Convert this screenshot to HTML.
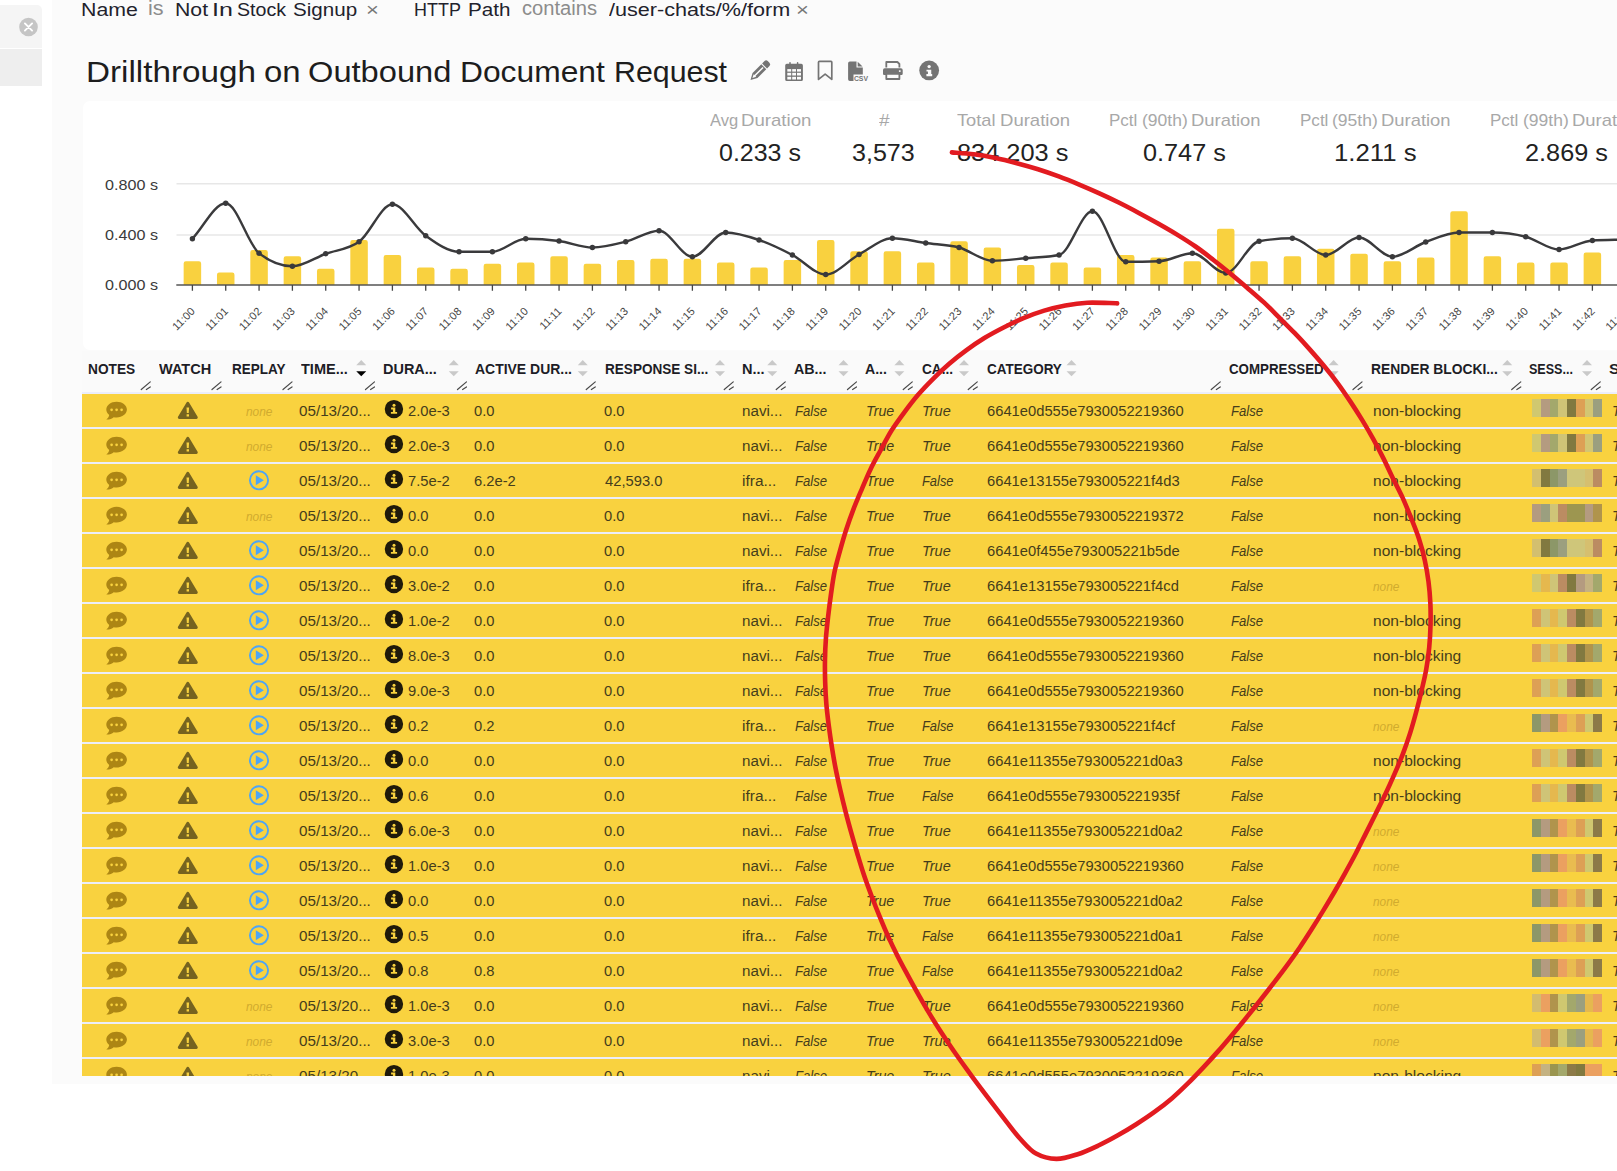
<!DOCTYPE html>
<html><head><meta charset="utf-8"><title>Drillthrough on Outbound Document Request</title>
<style>
html,body{margin:0;padding:0;background:#fff;}
body{width:1617px;height:1171px;overflow:hidden;position:relative;font-family:"Liberation Sans",sans-serif;}
.t{position:absolute;white-space:pre;transform-origin:0 0;}
.abs{position:absolute;}
.row{position:absolute;left:82px;width:1535px;height:33px;background:#f9d23f;}
.sep{position:absolute;left:82px;width:1535px;height:2px;background:#eceefa;}
svg{position:absolute;left:0;top:0;overflow:visible;}
</style></head><body>
<div class="abs" style="left:52px;top:0;width:1565px;height:1083.5px;background:#fbfbfb"></div><div class="abs" style="left:0;top:5px;width:42px;height:43.3px;background:#f5f5f5;border-radius:0 5px 0 0"></div><div class="abs" style="left:0;top:49px;width:42px;height:37px;background:#eeeeee"></div><svg width="60" height="60" viewBox="0 0 60 60"><circle cx="28.5" cy="27" r="9.3" fill="#c5c5c5"/><path d="M24.9 23.4l7.2 7.2M32.1 23.4l-7.2 7.2" stroke="#fff" stroke-width="1.9" stroke-linecap="round"/></svg><div class="abs" style="left:82.5px;top:101px;width:1540px;height:248.5px;background:#fff;border-radius:7px"></div><div class="abs" style="left:82px;top:351px;width:1535px;height:41px;background:#fafafa"></div><svg width="1617" height="360" viewBox="0 0 1617 360"><g stroke="#e7e7e7" stroke-width="1.4"><path d="M176.5 183.8H1617M176.5 235H1617"/></g><path d="M183.65 285.0V263.45Q183.65 261.25 185.85 261.25H198.95Q201.15 261.25 201.15 263.45V285.0ZM216.98 285.0V274.7Q216.98 272.5 219.18 272.5H232.28Q234.48 272.5 234.48 274.7V285.0ZM250.32 285.0V252.2Q250.32 250 252.52 250H265.62Q267.82 250 267.82 252.2V285.0ZM283.65 285.0V258.45Q283.65 256.25 285.85 256.25H298.95Q301.15 256.25 301.15 258.45V285.0ZM316.98 285.0V270.95Q316.98 268.75 319.18 268.75H332.28Q334.48 268.75 334.48 270.95V285.0ZM350.31 285.0V242.2Q350.31 240 352.51 240H365.62Q367.81 240 367.81 242.2V285.0ZM383.65 285.0V257.2Q383.65 255 385.85 255H398.95Q401.15 255 401.15 257.2V285.0ZM416.98 285.0V269.7Q416.98 267.5 419.18 267.5H432.28Q434.48 267.5 434.48 269.7V285.0ZM450.31 285.0V270.95Q450.31 268.75 452.51 268.75H465.61Q467.81 268.75 467.81 270.95V285.0ZM483.65 285.0V265.95Q483.65 263.75 485.85 263.75H498.95Q501.15 263.75 501.15 265.95V285.0ZM516.98 285.0V264.7Q516.98 262.5 519.18 262.5H532.28Q534.48 262.5 534.48 264.7V285.0ZM550.31 285.0V258.45Q550.31 256.25 552.51 256.25H565.61Q567.81 256.25 567.81 258.45V285.0ZM583.65 285.0V265.95Q583.65 263.75 585.85 263.75H598.95Q601.15 263.75 601.15 265.95V285.0ZM616.98 285.0V262.2Q616.98 260 619.18 260H632.28Q634.48 260 634.48 262.2V285.0ZM650.31 285.0V260.95Q650.31 258.75 652.51 258.75H665.61Q667.81 258.75 667.81 260.95V285.0ZM683.64 285.0V260.95Q683.64 258.75 685.85 258.75H698.94Q701.14 258.75 701.14 260.95V285.0ZM716.98 285.0V264.7Q716.98 262.5 719.18 262.5H732.28Q734.48 262.5 734.48 264.7V285.0ZM750.31 285.0V269.7Q750.31 267.5 752.51 267.5H765.61Q767.81 267.5 767.81 269.7V285.0ZM783.64 285.0V262.2Q783.64 260 785.84 260H798.94Q801.14 260 801.14 262.2V285.0ZM816.98 285.0V242.2Q816.98 240 819.18 240H832.28Q834.48 240 834.48 242.2V285.0ZM850.31 285.0V253.45Q850.31 251.25 852.51 251.25H865.61Q867.81 251.25 867.81 253.45V285.0ZM883.64 285.0V253.45Q883.64 251.25 885.84 251.25H898.94Q901.14 251.25 901.14 253.45V285.0ZM916.98 285.0V264.7Q916.98 262.5 919.18 262.5H932.28Q934.48 262.5 934.48 264.7V285.0ZM950.31 285.0V243.45Q950.31 241.25 952.51 241.25H965.61Q967.81 241.25 967.81 243.45V285.0ZM983.64 285.0V249.7Q983.64 247.5 985.84 247.5H998.94Q1001.14 247.5 1001.14 249.7V285.0ZM1016.97 285.0V267.2Q1016.97 265 1019.17 265H1032.27Q1034.47 265 1034.47 267.2V285.0ZM1050.31 285.0V264.7Q1050.31 262.5 1052.51 262.5H1065.61Q1067.81 262.5 1067.81 264.7V285.0ZM1083.64 285.0V269.7Q1083.64 267.5 1085.84 267.5H1098.94Q1101.14 267.5 1101.14 269.7V285.0ZM1116.97 285.0V257.2Q1116.97 255 1119.17 255H1132.27Q1134.47 255 1134.47 257.2V285.0ZM1150.31 285.0V259.7Q1150.31 257.5 1152.51 257.5H1165.61Q1167.81 257.5 1167.81 259.7V285.0ZM1183.64 285.0V263.45Q1183.64 261.25 1185.84 261.25H1198.94Q1201.14 261.25 1201.14 263.45V285.0ZM1216.97 285.0V230.95Q1216.97 228.75 1219.17 228.75H1232.27Q1234.47 228.75 1234.47 230.95V285.0ZM1250.31 285.0V263.45Q1250.31 261.25 1252.51 261.25H1265.61Q1267.81 261.25 1267.81 263.45V285.0ZM1283.64 285.0V258.45Q1283.64 256.25 1285.84 256.25H1298.94Q1301.14 256.25 1301.14 258.45V285.0ZM1316.97 285.0V250.95Q1316.97 248.75 1319.17 248.75H1332.27Q1334.47 248.75 1334.47 250.95V285.0ZM1350.31 285.0V255.95Q1350.31 253.75 1352.51 253.75H1365.61Q1367.81 253.75 1367.81 255.95V285.0ZM1383.64 285.0V263.45Q1383.64 261.25 1385.84 261.25H1398.94Q1401.14 261.25 1401.14 263.45V285.0ZM1416.97 285.0V259.7Q1416.97 257.5 1419.17 257.5H1432.27Q1434.47 257.5 1434.47 259.7V285.0ZM1450.3 285.0V213.45Q1450.3 211.25 1452.5 211.25H1465.6Q1467.8 211.25 1467.8 213.45V285.0ZM1483.64 285.0V258.45Q1483.64 256.25 1485.84 256.25H1498.94Q1501.14 256.25 1501.14 258.45V285.0ZM1516.97 285.0V264.7Q1516.97 262.5 1519.17 262.5H1532.27Q1534.47 262.5 1534.47 264.7V285.0ZM1550.3 285.0V264.7Q1550.3 262.5 1552.5 262.5H1565.6Q1567.8 262.5 1567.8 264.7V285.0ZM1583.64 285.0V254.7Q1583.64 252.5 1585.84 252.5H1598.94Q1601.14 252.5 1601.14 254.7V285.0Z" fill="#f9d13f"/><path d="M176.3 285.0H1617" stroke="#555" stroke-width="1.5"/><path d="M192.4 285.0V290.8M225.73 285.0V290.8M259.07 285.0V290.8M292.4 285.0V290.8M325.73 285.0V290.8M359.06 285.0V290.8M392.4 285.0V290.8M425.73 285.0V290.8M459.06 285.0V290.8M492.4 285.0V290.8M525.73 285.0V290.8M559.06 285.0V290.8M592.4 285.0V290.8M625.73 285.0V290.8M659.06 285.0V290.8M692.39 285.0V290.8M725.73 285.0V290.8M759.06 285.0V290.8M792.39 285.0V290.8M825.73 285.0V290.8M859.06 285.0V290.8M892.39 285.0V290.8M925.73 285.0V290.8M959.06 285.0V290.8M992.39 285.0V290.8M1025.72 285.0V290.8M1059.06 285.0V290.8M1092.39 285.0V290.8M1125.72 285.0V290.8M1159.06 285.0V290.8M1192.39 285.0V290.8M1225.72 285.0V290.8M1259.06 285.0V290.8M1292.39 285.0V290.8M1325.72 285.0V290.8M1359.06 285.0V290.8M1392.39 285.0V290.8M1425.72 285.0V290.8M1459.05 285.0V290.8M1492.39 285.0V290.8M1525.72 285.0V290.8M1559.05 285.0V290.8M1592.39 285.0V290.8M1625.72 285.0V290.8" stroke="#444" stroke-width="1.3"/><path d="M192.4 238.75C203.51 226.92 214.62 203.25 225.73 203.25C236.84 203.25 247.96 244.58 259.07 253.25C270.18 261.92 281.29 266.25 292.4 266.25C303.51 266.25 314.62 257.83 325.73 253.75C336.84 249.67 347.95 249.75 359.06 241.75C370.18 233.75 381.29 204.25 392.4 204.25C403.51 204.25 414.62 227.83 425.73 235.75C436.84 243.67 447.95 251.75 459.06 251.75C470.17 251.75 481.29 251.75 492.4 251.75C503.51 251.75 514.62 238.75 525.73 238.75C536.84 238.75 547.95 239.54 559.06 241C570.17 242.46 581.28 247.5 592.4 247.5C603.51 247.5 614.62 244.54 625.73 241.75C636.84 238.96 647.95 230.75 659.06 230.75C670.17 230.75 681.28 256.75 692.39 256.75C703.51 256.75 714.62 232.5 725.73 232.5C736.84 232.5 747.95 236.25 759.06 240C770.17 243.75 781.28 249.25 792.39 255C803.5 260.75 814.62 274.5 825.73 274.5C836.84 274.5 847.95 260.54 859.06 254.5C870.17 248.46 881.28 238.25 892.39 238.25C903.5 238.25 914.62 241.46 925.73 243C936.84 244.54 947.95 244.54 959.06 247.5C970.17 250.46 981.28 260.75 992.39 260.75C1003.5 260.75 1014.61 259.21 1025.72 258.25C1036.84 257.29 1047.95 257.17 1059.06 255C1070.17 252.83 1081.28 211.25 1092.39 211.25C1103.5 211.25 1114.61 261.75 1125.72 261.75C1136.84 261.75 1147.95 261.58 1159.06 261.25C1170.17 260.92 1181.28 253.25 1192.39 253.25C1203.5 253.25 1214.61 273 1225.72 273C1236.83 273 1247.94 243.25 1259.06 241.25C1270.17 239.25 1281.28 238.25 1292.39 238.25C1303.5 238.25 1314.61 255 1325.72 255C1336.83 255 1347.94 237.5 1359.06 237.5C1370.17 237.5 1381.28 256.75 1392.39 256.75C1403.5 256.75 1414.61 246.04 1425.72 242C1436.83 237.96 1447.94 232.5 1459.05 232.5C1470.16 232.5 1481.28 232.5 1492.39 232.5C1503.5 232.5 1514.61 233.92 1525.72 236.75C1536.83 239.58 1547.94 249.5 1559.05 249.5C1570.16 249.5 1581.28 241.17 1592.39 240.5C1603.5 239.83 1614.61 239.83 1625.72 239.5" fill="none" stroke="#3a3a3c" stroke-width="2.4" stroke-linejoin="round"/><g fill="#39393b"><circle cx="192.4" cy="238.75" r="2.7"/><circle cx="225.73" cy="203.25" r="2.7"/><circle cx="259.07" cy="253.25" r="2.7"/><circle cx="292.4" cy="266.25" r="2.7"/><circle cx="325.73" cy="253.75" r="2.7"/><circle cx="359.06" cy="241.75" r="2.7"/><circle cx="392.4" cy="204.25" r="2.7"/><circle cx="425.73" cy="235.75" r="2.7"/><circle cx="459.06" cy="251.75" r="2.7"/><circle cx="492.4" cy="251.75" r="2.7"/><circle cx="525.73" cy="238.75" r="2.7"/><circle cx="559.06" cy="241" r="2.7"/><circle cx="592.4" cy="247.5" r="2.7"/><circle cx="625.73" cy="241.75" r="2.7"/><circle cx="659.06" cy="230.75" r="2.7"/><circle cx="692.39" cy="256.75" r="2.7"/><circle cx="725.73" cy="232.5" r="2.7"/><circle cx="759.06" cy="240" r="2.7"/><circle cx="792.39" cy="255" r="2.7"/><circle cx="825.73" cy="274.5" r="2.7"/><circle cx="859.06" cy="254.5" r="2.7"/><circle cx="892.39" cy="238.25" r="2.7"/><circle cx="925.73" cy="243" r="2.7"/><circle cx="959.06" cy="247.5" r="2.7"/><circle cx="992.39" cy="260.75" r="2.7"/><circle cx="1025.72" cy="258.25" r="2.7"/><circle cx="1059.06" cy="255" r="2.7"/><circle cx="1092.39" cy="211.25" r="2.7"/><circle cx="1125.72" cy="261.75" r="2.7"/><circle cx="1159.06" cy="261.25" r="2.7"/><circle cx="1192.39" cy="253.25" r="2.7"/><circle cx="1225.72" cy="273" r="2.7"/><circle cx="1259.06" cy="241.25" r="2.7"/><circle cx="1292.39" cy="238.25" r="2.7"/><circle cx="1325.72" cy="255" r="2.7"/><circle cx="1359.06" cy="237.5" r="2.7"/><circle cx="1392.39" cy="256.75" r="2.7"/><circle cx="1425.72" cy="242" r="2.7"/><circle cx="1459.05" cy="232.5" r="2.7"/><circle cx="1492.39" cy="232.5" r="2.7"/><circle cx="1525.72" cy="236.75" r="2.7"/><circle cx="1559.05" cy="249.5" r="2.7"/><circle cx="1592.39" cy="240.5" r="2.7"/><circle cx="1625.72" cy="239.5" r="2.7"/></g><g font-family="Liberation Sans, sans-serif" font-size="11" fill="#454545" text-anchor="end"><text transform="translate(195.6 312) rotate(-45)">11:00</text><text transform="translate(228.93 312) rotate(-45)">11:01</text><text transform="translate(262.27 312) rotate(-45)">11:02</text><text transform="translate(295.6 312) rotate(-45)">11:03</text><text transform="translate(328.93 312) rotate(-45)">11:04</text><text transform="translate(362.26 312) rotate(-45)">11:05</text><text transform="translate(395.6 312) rotate(-45)">11:06</text><text transform="translate(428.93 312) rotate(-45)">11:07</text><text transform="translate(462.26 312) rotate(-45)">11:08</text><text transform="translate(495.6 312) rotate(-45)">11:09</text><text transform="translate(528.93 312) rotate(-45)">11:10</text><text transform="translate(562.26 312) rotate(-45)">11:11</text><text transform="translate(595.6 312) rotate(-45)">11:12</text><text transform="translate(628.93 312) rotate(-45)">11:13</text><text transform="translate(662.26 312) rotate(-45)">11:14</text><text transform="translate(695.6 312) rotate(-45)">11:15</text><text transform="translate(728.93 312) rotate(-45)">11:16</text><text transform="translate(762.26 312) rotate(-45)">11:17</text><text transform="translate(795.59 312) rotate(-45)">11:18</text><text transform="translate(828.93 312) rotate(-45)">11:19</text><text transform="translate(862.26 312) rotate(-45)">11:20</text><text transform="translate(895.59 312) rotate(-45)">11:21</text><text transform="translate(928.93 312) rotate(-45)">11:22</text><text transform="translate(962.26 312) rotate(-45)">11:23</text><text transform="translate(995.59 312) rotate(-45)">11:24</text><text transform="translate(1028.92 312) rotate(-45)">11:25</text><text transform="translate(1062.26 312) rotate(-45)">11:26</text><text transform="translate(1095.59 312) rotate(-45)">11:27</text><text transform="translate(1128.92 312) rotate(-45)">11:28</text><text transform="translate(1162.26 312) rotate(-45)">11:29</text><text transform="translate(1195.59 312) rotate(-45)">11:30</text><text transform="translate(1228.92 312) rotate(-45)">11:31</text><text transform="translate(1262.26 312) rotate(-45)">11:32</text><text transform="translate(1295.59 312) rotate(-45)">11:33</text><text transform="translate(1328.92 312) rotate(-45)">11:34</text><text transform="translate(1362.26 312) rotate(-45)">11:35</text><text transform="translate(1395.59 312) rotate(-45)">11:36</text><text transform="translate(1428.92 312) rotate(-45)">11:37</text><text transform="translate(1462.25 312) rotate(-45)">11:38</text><text transform="translate(1495.59 312) rotate(-45)">11:39</text><text transform="translate(1528.92 312) rotate(-45)">11:40</text><text transform="translate(1562.25 312) rotate(-45)">11:41</text><text transform="translate(1595.59 312) rotate(-45)">11:42</text><text transform="translate(1628.92 312) rotate(-45)">11:43</text></g></svg><svg width="1617" height="100" viewBox="0 0 1617 100"><g transform="translate(750.5 80.0) rotate(-45)"><path fill="#747474" d="M0 0L6.4 -3.5H18.8V3.5H6.4Z"/><path fill="#747474" d="M19.9 -3.5H23.3a2.3 2.3 0 0 1 2.3 2.3V1.2a2.3 2.3 0 0 1 -2.3 2.3H19.9Z"/><path fill="#fbfbfb" d="M2.7 0L6.3 -1.8V-0.8H17.7V0.8H6.3V1.8Z"/></g><g><path fill="#747474" d="M786.8 63.8h14.5a1.6 1.6 0 0 1 1.6 1.6v14.1a1.6 1.6 0 0 1-1.6 1.6h-14.5a1.6 1.6 0 0 1-1.600-1.6V65.4a1.6 1.6 0 0 1 1.6-1.6z"/><path d="M790 62.7v2.4M797.600 62.700v2.4" stroke="#747474" stroke-width="1.500" stroke-linecap="round"/><g fill="#fbfbfb"><rect x="787.3" y="69.1" width="3.9" height="2.5"/><rect x="787.3" y="72.8" width="3.9" height="2.7"/><rect x="787.3" y="76.8" width="3.9" height="2.7"/><rect x="792.2" y="69.1" width="3.8" height="2.5"/><rect x="792.2" y="72.8" width="3.8" height="2.7"/><rect x="792.2" y="76.8" width="3.8" height="2.7"/><rect x="797.0" y="69.1" width="4.0" height="2.5"/><rect x="797.0" y="72.8" width="4.0" height="2.7"/><rect x="797.0" y="76.8" width="4.0" height="2.7"/></g></g><path d="M819.3 61.35h11.700a0.8 0.8 0 0 1 0.8 0.8v17.2l-6.650-5.3-6.650 5.3v-17.2a0.8 0.8 0 0 1 0.8-0.8z" fill="none" stroke="#747474" stroke-width="1.700" stroke-linejoin="round"/><g><path fill="#747474" d="M849.9 61.4H856.5V67.6H862.8V74.4H853.5V81.1H849.9A1.8 1.8 0 0 1 848.1 79.3V63.2A1.8 1.8 0 0 1 849.9 61.4z"/><path fill="#747474" d="M857.700 61.7L862.500 66.500H857.700z"/><text x="853.900" y="80.900" font-family="Liberation Sans, sans-serif" font-weight="bold" font-size="7.500" fill="#747474" textLength="14.100" lengthAdjust="spacingAndGlyphs">CSV</text></g><g><path fill="none" stroke="#747474" stroke-width="1.800" stroke-linejoin="round" d="M886.3 67.5V62h11.100l2 2V67.500"/><path fill="#747474" d="M884.800 68.2h16.100a1.800 1.800 0 0 1 1.800 1.800v4.100a0.800 0.800 0 0 1-0.800 0.800H883.800a0.800 0.800 0 0 1-0.800-0.800V70a1.800 1.800 0 0 1 1.800-1.800z"/><path fill="#fbfbfb" stroke="#747474" stroke-width="1.800" stroke-linejoin="round" d="M886.3 73.8h13.100v5.200h-13.100z"/><rect x="898.900" y="70.300" width="1.700" height="1.600" fill="#fbfbfb"/></g><g transform="translate(929.15 70.45)"><circle r="9.900" fill="#747474"/><g fill="#fbfbfb"><circle cx="0" cy="-3.900" r="1.650"/><path d="M-2.65 -0.700H2.100V3.600H3.050V5.700H-2.750V3.600H-1.200V1H-2.650z"/></g></g></svg><span class="t" style="left:80.79px;top:-1.48px;font-size:18.7px;line-height:22px;color:#22222c;transform:scaleX(1.1401);">Name</span><span class="t" style="left:148.40px;top:-3.83px;font-size:20px;line-height:24px;color:#8c8c8c;transform:scaleX(1.0769);">is</span><span class="t" style="left:174.55px;top:-1.48px;font-size:18.7px;line-height:22px;color:#22222c;transform:scaleX(1.1362);">Not</span><span class="t" style="left:211.97px;top:-1.48px;font-size:18.7px;line-height:22px;color:#22222c;transform:scaleX(1.3391);">In</span><span class="t" style="left:237.16px;top:-1.48px;font-size:18.7px;line-height:22px;color:#22222c;transform:scaleX(1.0485);">Stock</span><span class="t" style="left:292.87px;top:-1.48px;font-size:18.7px;line-height:22px;color:#22222c;transform:scaleX(1.1018);">Signup</span><span class="t" style="left:366.09px;top:-1.48px;font-size:18.7px;line-height:22px;color:#777;transform:scaleX(1.1765);">×</span><span class="t" style="left:414.06px;top:-1.48px;font-size:18.7px;line-height:22px;color:#22222c;transform:scaleX(0.9601);">HTTP</span><span class="t" style="left:468.34px;top:-1.48px;font-size:18.7px;line-height:22px;color:#22222c;transform:scaleX(1.1043);">Path</span><span class="t" style="left:521.69px;top:-3.83px;font-size:20px;line-height:24px;color:#8c8c8c;transform:scaleX(1.0070);">contains</span><span class="t" style="left:608.75px;top:-1.48px;font-size:18.7px;line-height:22px;color:#22222c;transform:scaleX(1.1558);">/user-chats/%/form</span><span class="t" style="left:796.09px;top:-1.48px;font-size:18.7px;line-height:22px;color:#777;transform:scaleX(1.1765);">×</span><span class="t" style="left:85.65px;top:54.06px;font-size:29.4px;line-height:35px;color:#1d1d1d;transform:scaleX(1.1306);">Drillthrough</span><span class="t" style="left:263.97px;top:54.06px;font-size:29.4px;line-height:35px;color:#1d1d1d;transform:scaleX(1.1201);">on</span><span class="t" style="left:308.47px;top:54.06px;font-size:29.4px;line-height:35px;color:#1d1d1d;transform:scaleX(1.1101);">Outbound</span><span class="t" style="left:460.02px;top:54.06px;font-size:29.4px;line-height:35px;color:#1d1d1d;transform:scaleX(1.0812);">Document</span><span class="t" style="left:613.88px;top:54.06px;font-size:29.4px;line-height:35px;color:#1d1d1d;transform:scaleX(1.0321);">Request</span><span class="t" style="left:709.50px;top:110.82px;font-size:16.1px;line-height:19px;color:#a8a8a8;transform:scaleX(1.0284);">Avg</span><span class="t" style="left:741.00px;top:110.82px;font-size:16.1px;line-height:19px;color:#a8a8a8;transform:scaleX(1.1570);">Duration</span><span class="t" style="left:878.75px;top:110.82px;font-size:16.1px;line-height:19px;color:#a8a8a8;transform:scaleX(1.1798);">#</span><span class="t" style="left:957.16px;top:110.82px;font-size:16.1px;line-height:19px;color:#a8a8a8;transform:scaleX(1.1339);">Total</span><span class="t" style="left:999.75px;top:110.82px;font-size:16.1px;line-height:19px;color:#a8a8a8;transform:scaleX(1.1519);">Duration</span><span class="t" style="left:1108.83px;top:110.82px;font-size:16.1px;line-height:19px;color:#a8a8a8;transform:scaleX(1.0547);">Pctl</span><span class="t" style="left:1141.52px;top:110.82px;font-size:16.1px;line-height:19px;color:#a8a8a8;transform:scaleX(1.0872);">(90th)</span><span class="t" style="left:1191.11px;top:110.82px;font-size:16.1px;line-height:19px;color:#a8a8a8;transform:scaleX(1.1433);">Duration</span><span class="t" style="left:1299.62px;top:110.82px;font-size:16.1px;line-height:19px;color:#a8a8a8;transform:scaleX(1.0588);">Pctl</span><span class="t" style="left:1332.32px;top:110.82px;font-size:16.1px;line-height:19px;color:#a8a8a8;transform:scaleX(1.0872);">(95th)</span><span class="t" style="left:1381.31px;top:110.82px;font-size:16.1px;line-height:19px;color:#a8a8a8;transform:scaleX(1.1433);">Duration</span><span class="t" style="left:1489.83px;top:110.82px;font-size:16.1px;line-height:19px;color:#a8a8a8;transform:scaleX(1.0547);">Pctl</span><span class="t" style="left:1522.52px;top:110.82px;font-size:16.1px;line-height:19px;color:#a8a8a8;transform:scaleX(1.0872);">(99th)</span><span class="t" style="left:1572.11px;top:110.82px;font-size:16.1px;line-height:19px;color:#a8a8a8;transform:scaleX(1.1433);">Duration</span><span class="t" style="left:718.88px;top:137.68px;font-size:24.3px;line-height:29px;color:#222;transform:scaleX(1.0274);">0.233 s</span><span class="t" style="left:852.07px;top:137.68px;font-size:24.3px;line-height:29px;color:#222;transform:scaleX(1.0315);">3,573</span><span class="t" style="left:956.96px;top:137.68px;font-size:24.3px;line-height:29px;color:#222;transform:scaleX(1.0440);">834.203 s</span><span class="t" style="left:1143.06px;top:137.68px;font-size:24.3px;line-height:29px;color:#222;transform:scaleX(1.0390);">0.747 s</span><span class="t" style="left:1334.09px;top:137.68px;font-size:24.3px;line-height:29px;color:#222;transform:scaleX(1.0604);">1.211 s</span><span class="t" style="left:1524.55px;top:137.68px;font-size:24.3px;line-height:29px;color:#222;transform:scaleX(1.0404);">2.869 s</span><span class="t" style="left:105.13px;top:174.73px;font-size:15.5px;line-height:19px;color:#3a3a3a;transform:scaleX(1.0414);">0.800 s</span><span class="t" style="left:105.13px;top:224.98px;font-size:15.5px;line-height:19px;color:#3a3a3a;transform:scaleX(1.0414);">0.400 s</span><span class="t" style="left:105.13px;top:274.98px;font-size:15.5px;line-height:19px;color:#3a3a3a;transform:scaleX(1.0414);">0.000 s</span><span class="t" style="left:87.87px;top:361.40px;font-size:14px;line-height:17px;color:#1d1d26;transform:scaleX(0.9778);font-weight:bold;">NOTES</span><span class="t" style="left:159.25px;top:361.40px;font-size:14px;line-height:17px;color:#1d1d26;transform:scaleX(1.0380);font-weight:bold;">WATCH</span><span class="t" style="left:232.13px;top:361.40px;font-size:14px;line-height:17px;color:#1d1d26;transform:scaleX(0.9640);font-weight:bold;">REPLAY</span><span class="t" style="left:301.15px;top:361.40px;font-size:14px;line-height:17px;color:#1d1d26;transform:scaleX(1.0369);font-weight:bold;">TIME...</span><span class="t" style="left:382.82px;top:361.40px;font-size:14px;line-height:17px;color:#1d1d26;transform:scaleX(1.0334);font-weight:bold;">DURA...</span><span class="t" style="left:475.20px;top:361.40px;font-size:14px;line-height:17px;color:#1d1d26;transform:scaleX(0.9970);font-weight:bold;">ACTIVE DUR...</span><span class="t" style="left:604.63px;top:361.40px;font-size:14px;line-height:17px;color:#1d1d26;transform:scaleX(0.9685);font-weight:bold;">RESPONSE SI...</span><span class="t" style="left:741.57px;top:361.40px;font-size:14px;line-height:17px;color:#1d1d26;transform:scaleX(1.0380);font-weight:bold;">N...</span><span class="t" style="left:794.19px;top:361.40px;font-size:14px;line-height:17px;color:#1d1d26;transform:scaleX(1.0179);font-weight:bold;">AB...</span><span class="t" style="left:865.20px;top:361.40px;font-size:14px;line-height:17px;color:#1d1d26;transform:scaleX(1.0078);font-weight:bold;">A...</span><span class="t" style="left:921.51px;top:361.40px;font-size:14px;line-height:17px;color:#1d1d26;transform:scaleX(0.9754);font-weight:bold;">CA...</span><span class="t" style="left:986.52px;top:361.40px;font-size:14px;line-height:17px;color:#1d1d26;transform:scaleX(0.9625);font-weight:bold;">CATEGORY</span><span class="t" style="left:1228.77px;top:361.40px;font-size:14px;line-height:17px;color:#1d1d26;transform:scaleX(0.9512);font-weight:bold;">COMPRESSED</span><span class="t" style="left:1370.86px;top:361.40px;font-size:14px;line-height:17px;color:#1d1d26;transform:scaleX(0.9878);font-weight:bold;">RENDER BLOCKI...</span><span class="t" style="left:1529.39px;top:361.40px;font-size:14px;line-height:17px;color:#1d1d26;transform:scaleX(0.8956);font-weight:bold;">SESS...</span><span class="t" style="left:1609.30px;top:361.40px;font-size:14px;line-height:17px;color:#1d1d26;transform:scaleX(1.1309);font-weight:bold;">SI</span><svg width="1617" height="400" viewBox="0 0 1617 400"><path d="M356.25 365.3h10l-5-5.4z" fill="#c9c9c9"/><path d="M356.25 371.2h10l-5 5z" fill="#000"/><path d="M448.75 365.3h10l-5-5.4z" fill="#c9c9c9"/><path d="M448.75 371.2h10l-5 5z" fill="#c9c9c9"/><path d="M577.75 365.3h10l-5-5.4z" fill="#c9c9c9"/><path d="M577.75 371.2h10l-5 5z" fill="#c9c9c9"/><path d="M715 365.3h10l-5-5.4z" fill="#c9c9c9"/><path d="M715 371.2h10l-5 5z" fill="#c9c9c9"/><path d="M767.25 365.3h10l-5-5.4z" fill="#c9c9c9"/><path d="M767.25 371.2h10l-5 5z" fill="#c9c9c9"/><path d="M838.5 365.3h10l-5-5.4z" fill="#c9c9c9"/><path d="M838.5 371.2h10l-5 5z" fill="#c9c9c9"/><path d="M894.4 365.3h10l-5-5.4z" fill="#c9c9c9"/><path d="M894.4 371.2h10l-5 5z" fill="#c9c9c9"/><path d="M959 365.3h10l-5-5.4z" fill="#c9c9c9"/><path d="M959 371.2h10l-5 5z" fill="#c9c9c9"/><path d="M1066.5 365.3h10l-5-5.4z" fill="#c9c9c9"/><path d="M1066.5 371.2h10l-5 5z" fill="#c9c9c9"/><path d="M1328.6 365.3h10l-5-5.4z" fill="#c9c9c9"/><path d="M1328.6 371.2h10l-5 5z" fill="#c9c9c9"/><path d="M1502.25 365.3h10l-5-5.4z" fill="#c9c9c9"/><path d="M1502.25 371.2h10l-5 5z" fill="#c9c9c9"/><path d="M1582 365.3h10l-5-5.4z" fill="#c9c9c9"/><path d="M1582 371.2h10l-5 5z" fill="#c9c9c9"/><path d="M141.25 389.5L150.25 381.9M146.35 389.5L150.25 386.9M212 389.5L221 381.9M217.1 389.5L221 386.9M283 389.5L292 381.9M288.1 389.5L292 386.9M365.5 389.5L374.5 381.9M370.6 389.5L374.5 386.9M457.5 389.5L466.5 381.9M462.6 389.5L466.5 386.9M586.25 389.5L595.25 381.9M591.35 389.5L595.25 386.9M724.25 389.5L733.25 381.9M729.35 389.5L733.25 386.9M776.25 389.5L785.25 381.9M781.35 389.5L785.25 386.9M847.5 389.5L856.5 381.9M852.6 389.5L856.5 386.9M903.25 389.5L912.25 381.9M908.35 389.5L912.25 386.9M968.25 389.5L977.25 381.9M973.35 389.5L977.25 386.9M1211.25 389.5L1220.25 381.9M1216.35 389.5L1220.25 386.9M1353 389.5L1362 381.9M1358.1 389.5L1362 386.9M1511.75 389.5L1520.75 381.9M1516.85 389.5L1520.75 386.9M1591.25 389.5L1600.25 381.9M1596.35 389.5L1600.25 386.9" stroke="#4a4a4a" stroke-width="1.2" stroke-linecap="round" fill="none"/></svg><div class="abs" style="left:0;top:0;width:1617px;height:1075.7px;overflow:hidden"><div class="sep" style="top:392px"></div><div class="row" style="top:394px"></div><div class="sep" style="top:427px"></div><div class="row" style="top:429px"></div><div class="sep" style="top:462px"></div><div class="row" style="top:464px"></div><div class="sep" style="top:497px"></div><div class="row" style="top:499px"></div><div class="sep" style="top:532px"></div><div class="row" style="top:534px"></div><div class="sep" style="top:567px"></div><div class="row" style="top:569px"></div><div class="sep" style="top:602px"></div><div class="row" style="top:604px"></div><div class="sep" style="top:637px"></div><div class="row" style="top:639px"></div><div class="sep" style="top:672px"></div><div class="row" style="top:674px"></div><div class="sep" style="top:707px"></div><div class="row" style="top:709px"></div><div class="sep" style="top:742px"></div><div class="row" style="top:744px"></div><div class="sep" style="top:777px"></div><div class="row" style="top:779px"></div><div class="sep" style="top:812px"></div><div class="row" style="top:814px"></div><div class="sep" style="top:847px"></div><div class="row" style="top:849px"></div><div class="sep" style="top:882px"></div><div class="row" style="top:884px"></div><div class="sep" style="top:917px"></div><div class="row" style="top:919px"></div><div class="sep" style="top:952px"></div><div class="row" style="top:954px"></div><div class="sep" style="top:987px"></div><div class="row" style="top:989px"></div><div class="sep" style="top:1022px"></div><div class="row" style="top:1024px"></div><div class="sep" style="top:1057px"></div><div class="row" style="top:1059px"></div><span class="t" style="left:245.90px;top:404.74px;font-size:12px;line-height:14px;color:#d1ab2e;transform:scaleX(0.9915);font-style:italic;">none</span><span class="t" style="left:299.46px;top:403.25px;font-size:14px;line-height:17px;color:#453d1c;transform:scaleX(1.0857);">05/13/20...</span><span class="t" style="left:408.16px;top:403.25px;font-size:14px;line-height:17px;color:#453d1c;transform:scaleX(1.0530);">2.0e-3</span><span class="t" style="left:474.47px;top:403.25px;font-size:14px;line-height:17px;color:#453d1c;transform:scaleX(1.0530);">0.0</span><span class="t" style="left:604.47px;top:403.25px;font-size:14px;line-height:17px;color:#453d1c;transform:scaleX(1.0530);">0.0</span><span class="t" style="left:741.52px;top:403.25px;font-size:14px;line-height:17px;color:#453d1c;transform:scaleX(1.0847);">navi...</span><span class="t" style="left:794.63px;top:403.25px;font-size:14px;line-height:17px;color:#453d1c;transform:scaleX(0.9371);font-style:italic;">False</span><span class="t" style="left:865.53px;top:403.25px;font-size:14px;line-height:17px;color:#453d1c;transform:scaleX(1.0168);font-style:italic;">True</span><span class="t" style="left:921.76px;top:403.25px;font-size:14px;line-height:17px;color:#453d1c;transform:scaleX(1.0360);font-style:italic;">True</span><span class="t" style="left:986.76px;top:403.25px;font-size:14px;line-height:17px;color:#453d1c;transform:scaleX(1.0530);">6641e0d555e7930052219360</span><span class="t" style="left:1230.63px;top:403.25px;font-size:14px;line-height:17px;color:#453d1c;transform:scaleX(0.9371);font-style:italic;">False</span><span class="t" style="left:1372.75px;top:403.25px;font-size:14px;line-height:17px;color:#453d1c;transform:scaleX(1.1115);">non-blocking</span><span class="t" style="left:1611.78px;top:403.25px;font-size:14px;line-height:17px;color:#453d1c;transform:scaleX(1.0168);font-style:italic;">True</span><span class="t" style="left:245.90px;top:439.74px;font-size:12px;line-height:14px;color:#d1ab2e;transform:scaleX(0.9915);font-style:italic;">none</span><span class="t" style="left:299.46px;top:438.25px;font-size:14px;line-height:17px;color:#453d1c;transform:scaleX(1.0857);">05/13/20...</span><span class="t" style="left:408.16px;top:438.25px;font-size:14px;line-height:17px;color:#453d1c;transform:scaleX(1.0530);">2.0e-3</span><span class="t" style="left:474.47px;top:438.25px;font-size:14px;line-height:17px;color:#453d1c;transform:scaleX(1.0530);">0.0</span><span class="t" style="left:604.47px;top:438.25px;font-size:14px;line-height:17px;color:#453d1c;transform:scaleX(1.0530);">0.0</span><span class="t" style="left:741.52px;top:438.25px;font-size:14px;line-height:17px;color:#453d1c;transform:scaleX(1.0847);">navi...</span><span class="t" style="left:794.63px;top:438.25px;font-size:14px;line-height:17px;color:#453d1c;transform:scaleX(0.9371);font-style:italic;">False</span><span class="t" style="left:865.53px;top:438.25px;font-size:14px;line-height:17px;color:#453d1c;transform:scaleX(1.0168);font-style:italic;">True</span><span class="t" style="left:921.76px;top:438.25px;font-size:14px;line-height:17px;color:#453d1c;transform:scaleX(1.0360);font-style:italic;">True</span><span class="t" style="left:986.76px;top:438.25px;font-size:14px;line-height:17px;color:#453d1c;transform:scaleX(1.0530);">6641e0d555e7930052219360</span><span class="t" style="left:1230.63px;top:438.25px;font-size:14px;line-height:17px;color:#453d1c;transform:scaleX(0.9371);font-style:italic;">False</span><span class="t" style="left:1372.75px;top:438.25px;font-size:14px;line-height:17px;color:#453d1c;transform:scaleX(1.1115);">non-blocking</span><span class="t" style="left:1611.78px;top:438.25px;font-size:14px;line-height:17px;color:#453d1c;transform:scaleX(1.0168);font-style:italic;">True</span><span class="t" style="left:299.46px;top:473.25px;font-size:14px;line-height:17px;color:#453d1c;transform:scaleX(1.0857);">05/13/20...</span><span class="t" style="left:408.16px;top:473.25px;font-size:14px;line-height:17px;color:#453d1c;transform:scaleX(1.0530);">7.5e-2</span><span class="t" style="left:474.26px;top:473.25px;font-size:14px;line-height:17px;color:#453d1c;transform:scaleX(1.0530);">6.2e-2</span><span class="t" style="left:604.68px;top:473.25px;font-size:14px;line-height:17px;color:#453d1c;transform:scaleX(1.0530);">42,593.0</span><span class="t" style="left:741.60px;top:473.25px;font-size:14px;line-height:17px;color:#453d1c;transform:scaleX(1.1058);">ifra...</span><span class="t" style="left:794.63px;top:473.25px;font-size:14px;line-height:17px;color:#453d1c;transform:scaleX(0.9371);font-style:italic;">False</span><span class="t" style="left:865.53px;top:473.25px;font-size:14px;line-height:17px;color:#453d1c;transform:scaleX(1.0168);font-style:italic;">True</span><span class="t" style="left:921.93px;top:473.25px;font-size:14px;line-height:17px;color:#453d1c;transform:scaleX(0.9206);font-style:italic;">False</span><span class="t" style="left:986.76px;top:473.25px;font-size:14px;line-height:17px;color:#453d1c;transform:scaleX(1.0530);">6641e13155e793005221f4d3</span><span class="t" style="left:1230.63px;top:473.25px;font-size:14px;line-height:17px;color:#453d1c;transform:scaleX(0.9371);font-style:italic;">False</span><span class="t" style="left:1372.75px;top:473.25px;font-size:14px;line-height:17px;color:#453d1c;transform:scaleX(1.1115);">non-blocking</span><span class="t" style="left:1611.78px;top:473.25px;font-size:14px;line-height:17px;color:#453d1c;transform:scaleX(1.0168);font-style:italic;">True</span><span class="t" style="left:245.90px;top:509.74px;font-size:12px;line-height:14px;color:#d1ab2e;transform:scaleX(0.9915);font-style:italic;">none</span><span class="t" style="left:299.46px;top:508.25px;font-size:14px;line-height:17px;color:#453d1c;transform:scaleX(1.0857);">05/13/20...</span><span class="t" style="left:408.37px;top:508.25px;font-size:14px;line-height:17px;color:#453d1c;transform:scaleX(1.0530);">0.0</span><span class="t" style="left:474.47px;top:508.25px;font-size:14px;line-height:17px;color:#453d1c;transform:scaleX(1.0530);">0.0</span><span class="t" style="left:604.47px;top:508.25px;font-size:14px;line-height:17px;color:#453d1c;transform:scaleX(1.0530);">0.0</span><span class="t" style="left:741.52px;top:508.25px;font-size:14px;line-height:17px;color:#453d1c;transform:scaleX(1.0847);">navi...</span><span class="t" style="left:794.63px;top:508.25px;font-size:14px;line-height:17px;color:#453d1c;transform:scaleX(0.9371);font-style:italic;">False</span><span class="t" style="left:865.53px;top:508.25px;font-size:14px;line-height:17px;color:#453d1c;transform:scaleX(1.0168);font-style:italic;">True</span><span class="t" style="left:921.76px;top:508.25px;font-size:14px;line-height:17px;color:#453d1c;transform:scaleX(1.0360);font-style:italic;">True</span><span class="t" style="left:986.76px;top:508.25px;font-size:14px;line-height:17px;color:#453d1c;transform:scaleX(1.0530);">6641e0d555e7930052219372</span><span class="t" style="left:1230.63px;top:508.25px;font-size:14px;line-height:17px;color:#453d1c;transform:scaleX(0.9371);font-style:italic;">False</span><span class="t" style="left:1372.75px;top:508.25px;font-size:14px;line-height:17px;color:#453d1c;transform:scaleX(1.1115);">non-blocking</span><span class="t" style="left:1611.78px;top:508.25px;font-size:14px;line-height:17px;color:#453d1c;transform:scaleX(1.0168);font-style:italic;">True</span><span class="t" style="left:299.46px;top:543.25px;font-size:14px;line-height:17px;color:#453d1c;transform:scaleX(1.0857);">05/13/20...</span><span class="t" style="left:408.37px;top:543.25px;font-size:14px;line-height:17px;color:#453d1c;transform:scaleX(1.0530);">0.0</span><span class="t" style="left:474.47px;top:543.25px;font-size:14px;line-height:17px;color:#453d1c;transform:scaleX(1.0530);">0.0</span><span class="t" style="left:604.47px;top:543.25px;font-size:14px;line-height:17px;color:#453d1c;transform:scaleX(1.0530);">0.0</span><span class="t" style="left:741.52px;top:543.25px;font-size:14px;line-height:17px;color:#453d1c;transform:scaleX(1.0847);">navi...</span><span class="t" style="left:794.63px;top:543.25px;font-size:14px;line-height:17px;color:#453d1c;transform:scaleX(0.9371);font-style:italic;">False</span><span class="t" style="left:865.53px;top:543.25px;font-size:14px;line-height:17px;color:#453d1c;transform:scaleX(1.0168);font-style:italic;">True</span><span class="t" style="left:921.76px;top:543.25px;font-size:14px;line-height:17px;color:#453d1c;transform:scaleX(1.0360);font-style:italic;">True</span><span class="t" style="left:986.76px;top:543.25px;font-size:14px;line-height:17px;color:#453d1c;transform:scaleX(1.0530);">6641e0f455e793005221b5de</span><span class="t" style="left:1230.63px;top:543.25px;font-size:14px;line-height:17px;color:#453d1c;transform:scaleX(0.9371);font-style:italic;">False</span><span class="t" style="left:1372.75px;top:543.25px;font-size:14px;line-height:17px;color:#453d1c;transform:scaleX(1.1115);">non-blocking</span><span class="t" style="left:1611.78px;top:543.25px;font-size:14px;line-height:17px;color:#453d1c;transform:scaleX(1.0168);font-style:italic;">True</span><span class="t" style="left:299.46px;top:578.25px;font-size:14px;line-height:17px;color:#453d1c;transform:scaleX(1.0857);">05/13/20...</span><span class="t" style="left:408.37px;top:578.25px;font-size:14px;line-height:17px;color:#453d1c;transform:scaleX(1.0530);">3.0e-2</span><span class="t" style="left:474.47px;top:578.25px;font-size:14px;line-height:17px;color:#453d1c;transform:scaleX(1.0530);">0.0</span><span class="t" style="left:604.47px;top:578.25px;font-size:14px;line-height:17px;color:#453d1c;transform:scaleX(1.0530);">0.0</span><span class="t" style="left:741.60px;top:578.25px;font-size:14px;line-height:17px;color:#453d1c;transform:scaleX(1.1058);">ifra...</span><span class="t" style="left:794.63px;top:578.25px;font-size:14px;line-height:17px;color:#453d1c;transform:scaleX(0.9371);font-style:italic;">False</span><span class="t" style="left:865.53px;top:578.25px;font-size:14px;line-height:17px;color:#453d1c;transform:scaleX(1.0168);font-style:italic;">True</span><span class="t" style="left:921.76px;top:578.25px;font-size:14px;line-height:17px;color:#453d1c;transform:scaleX(1.0360);font-style:italic;">True</span><span class="t" style="left:986.76px;top:578.25px;font-size:14px;line-height:17px;color:#453d1c;transform:scaleX(1.0530);">6641e13155e793005221f4cd</span><span class="t" style="left:1230.63px;top:578.25px;font-size:14px;line-height:17px;color:#453d1c;transform:scaleX(0.9371);font-style:italic;">False</span><span class="t" style="left:1373.30px;top:579.74px;font-size:12px;line-height:14px;color:#d1ab2e;transform:scaleX(0.9877);font-style:italic;">none</span><span class="t" style="left:1611.78px;top:578.25px;font-size:14px;line-height:17px;color:#453d1c;transform:scaleX(1.0168);font-style:italic;">True</span><span class="t" style="left:299.46px;top:613.25px;font-size:14px;line-height:17px;color:#453d1c;transform:scaleX(1.0857);">05/13/20...</span><span class="t" style="left:407.85px;top:613.25px;font-size:14px;line-height:17px;color:#453d1c;transform:scaleX(1.0530);">1.0e-2</span><span class="t" style="left:474.47px;top:613.25px;font-size:14px;line-height:17px;color:#453d1c;transform:scaleX(1.0530);">0.0</span><span class="t" style="left:604.47px;top:613.25px;font-size:14px;line-height:17px;color:#453d1c;transform:scaleX(1.0530);">0.0</span><span class="t" style="left:741.52px;top:613.25px;font-size:14px;line-height:17px;color:#453d1c;transform:scaleX(1.0847);">navi...</span><span class="t" style="left:794.63px;top:613.25px;font-size:14px;line-height:17px;color:#453d1c;transform:scaleX(0.9371);font-style:italic;">False</span><span class="t" style="left:865.53px;top:613.25px;font-size:14px;line-height:17px;color:#453d1c;transform:scaleX(1.0168);font-style:italic;">True</span><span class="t" style="left:921.76px;top:613.25px;font-size:14px;line-height:17px;color:#453d1c;transform:scaleX(1.0360);font-style:italic;">True</span><span class="t" style="left:986.76px;top:613.25px;font-size:14px;line-height:17px;color:#453d1c;transform:scaleX(1.0530);">6641e0d555e7930052219360</span><span class="t" style="left:1230.63px;top:613.25px;font-size:14px;line-height:17px;color:#453d1c;transform:scaleX(0.9371);font-style:italic;">False</span><span class="t" style="left:1372.75px;top:613.25px;font-size:14px;line-height:17px;color:#453d1c;transform:scaleX(1.1115);">non-blocking</span><span class="t" style="left:1611.78px;top:613.25px;font-size:14px;line-height:17px;color:#453d1c;transform:scaleX(1.0168);font-style:italic;">True</span><span class="t" style="left:299.46px;top:648.25px;font-size:14px;line-height:17px;color:#453d1c;transform:scaleX(1.0857);">05/13/20...</span><span class="t" style="left:408.27px;top:648.25px;font-size:14px;line-height:17px;color:#453d1c;transform:scaleX(1.0530);">8.0e-3</span><span class="t" style="left:474.47px;top:648.25px;font-size:14px;line-height:17px;color:#453d1c;transform:scaleX(1.0530);">0.0</span><span class="t" style="left:604.47px;top:648.25px;font-size:14px;line-height:17px;color:#453d1c;transform:scaleX(1.0530);">0.0</span><span class="t" style="left:741.52px;top:648.25px;font-size:14px;line-height:17px;color:#453d1c;transform:scaleX(1.0847);">navi...</span><span class="t" style="left:794.63px;top:648.25px;font-size:14px;line-height:17px;color:#453d1c;transform:scaleX(0.9371);font-style:italic;">False</span><span class="t" style="left:865.53px;top:648.25px;font-size:14px;line-height:17px;color:#453d1c;transform:scaleX(1.0168);font-style:italic;">True</span><span class="t" style="left:921.76px;top:648.25px;font-size:14px;line-height:17px;color:#453d1c;transform:scaleX(1.0360);font-style:italic;">True</span><span class="t" style="left:986.76px;top:648.25px;font-size:14px;line-height:17px;color:#453d1c;transform:scaleX(1.0530);">6641e0d555e7930052219360</span><span class="t" style="left:1230.63px;top:648.25px;font-size:14px;line-height:17px;color:#453d1c;transform:scaleX(0.9371);font-style:italic;">False</span><span class="t" style="left:1372.75px;top:648.25px;font-size:14px;line-height:17px;color:#453d1c;transform:scaleX(1.1115);">non-blocking</span><span class="t" style="left:1611.78px;top:648.25px;font-size:14px;line-height:17px;color:#453d1c;transform:scaleX(1.0168);font-style:italic;">True</span><span class="t" style="left:299.46px;top:683.25px;font-size:14px;line-height:17px;color:#453d1c;transform:scaleX(1.0857);">05/13/20...</span><span class="t" style="left:408.27px;top:683.25px;font-size:14px;line-height:17px;color:#453d1c;transform:scaleX(1.0530);">9.0e-3</span><span class="t" style="left:474.47px;top:683.25px;font-size:14px;line-height:17px;color:#453d1c;transform:scaleX(1.0530);">0.0</span><span class="t" style="left:604.47px;top:683.25px;font-size:14px;line-height:17px;color:#453d1c;transform:scaleX(1.0530);">0.0</span><span class="t" style="left:741.52px;top:683.25px;font-size:14px;line-height:17px;color:#453d1c;transform:scaleX(1.0847);">navi...</span><span class="t" style="left:794.63px;top:683.25px;font-size:14px;line-height:17px;color:#453d1c;transform:scaleX(0.9371);font-style:italic;">False</span><span class="t" style="left:865.53px;top:683.25px;font-size:14px;line-height:17px;color:#453d1c;transform:scaleX(1.0168);font-style:italic;">True</span><span class="t" style="left:921.76px;top:683.25px;font-size:14px;line-height:17px;color:#453d1c;transform:scaleX(1.0360);font-style:italic;">True</span><span class="t" style="left:986.76px;top:683.25px;font-size:14px;line-height:17px;color:#453d1c;transform:scaleX(1.0530);">6641e0d555e7930052219360</span><span class="t" style="left:1230.63px;top:683.25px;font-size:14px;line-height:17px;color:#453d1c;transform:scaleX(0.9371);font-style:italic;">False</span><span class="t" style="left:1372.75px;top:683.25px;font-size:14px;line-height:17px;color:#453d1c;transform:scaleX(1.1115);">non-blocking</span><span class="t" style="left:1611.78px;top:683.25px;font-size:14px;line-height:17px;color:#453d1c;transform:scaleX(1.0168);font-style:italic;">True</span><span class="t" style="left:299.46px;top:718.25px;font-size:14px;line-height:17px;color:#453d1c;transform:scaleX(1.0857);">05/13/20...</span><span class="t" style="left:408.37px;top:718.25px;font-size:14px;line-height:17px;color:#453d1c;transform:scaleX(1.0530);">0.2</span><span class="t" style="left:474.47px;top:718.25px;font-size:14px;line-height:17px;color:#453d1c;transform:scaleX(1.0530);">0.2</span><span class="t" style="left:604.47px;top:718.25px;font-size:14px;line-height:17px;color:#453d1c;transform:scaleX(1.0530);">0.0</span><span class="t" style="left:741.60px;top:718.25px;font-size:14px;line-height:17px;color:#453d1c;transform:scaleX(1.1058);">ifra...</span><span class="t" style="left:794.63px;top:718.25px;font-size:14px;line-height:17px;color:#453d1c;transform:scaleX(0.9371);font-style:italic;">False</span><span class="t" style="left:865.53px;top:718.25px;font-size:14px;line-height:17px;color:#453d1c;transform:scaleX(1.0168);font-style:italic;">True</span><span class="t" style="left:921.93px;top:718.25px;font-size:14px;line-height:17px;color:#453d1c;transform:scaleX(0.9206);font-style:italic;">False</span><span class="t" style="left:986.76px;top:718.25px;font-size:14px;line-height:17px;color:#453d1c;transform:scaleX(1.0530);">6641e13155e793005221f4cf</span><span class="t" style="left:1230.63px;top:718.25px;font-size:14px;line-height:17px;color:#453d1c;transform:scaleX(0.9371);font-style:italic;">False</span><span class="t" style="left:1373.30px;top:719.74px;font-size:12px;line-height:14px;color:#d1ab2e;transform:scaleX(0.9877);font-style:italic;">none</span><span class="t" style="left:1611.78px;top:718.25px;font-size:14px;line-height:17px;color:#453d1c;transform:scaleX(1.0168);font-style:italic;">True</span><span class="t" style="left:299.46px;top:753.25px;font-size:14px;line-height:17px;color:#453d1c;transform:scaleX(1.0857);">05/13/20...</span><span class="t" style="left:408.37px;top:753.25px;font-size:14px;line-height:17px;color:#453d1c;transform:scaleX(1.0530);">0.0</span><span class="t" style="left:474.47px;top:753.25px;font-size:14px;line-height:17px;color:#453d1c;transform:scaleX(1.0530);">0.0</span><span class="t" style="left:604.47px;top:753.25px;font-size:14px;line-height:17px;color:#453d1c;transform:scaleX(1.0530);">0.0</span><span class="t" style="left:741.52px;top:753.25px;font-size:14px;line-height:17px;color:#453d1c;transform:scaleX(1.0847);">navi...</span><span class="t" style="left:794.63px;top:753.25px;font-size:14px;line-height:17px;color:#453d1c;transform:scaleX(0.9371);font-style:italic;">False</span><span class="t" style="left:865.53px;top:753.25px;font-size:14px;line-height:17px;color:#453d1c;transform:scaleX(1.0168);font-style:italic;">True</span><span class="t" style="left:921.76px;top:753.25px;font-size:14px;line-height:17px;color:#453d1c;transform:scaleX(1.0360);font-style:italic;">True</span><span class="t" style="left:986.76px;top:753.25px;font-size:14px;line-height:17px;color:#453d1c;transform:scaleX(1.0530);">6641e11355e793005221d0a3</span><span class="t" style="left:1230.63px;top:753.25px;font-size:14px;line-height:17px;color:#453d1c;transform:scaleX(0.9371);font-style:italic;">False</span><span class="t" style="left:1372.75px;top:753.25px;font-size:14px;line-height:17px;color:#453d1c;transform:scaleX(1.1115);">non-blocking</span><span class="t" style="left:1611.78px;top:753.25px;font-size:14px;line-height:17px;color:#453d1c;transform:scaleX(1.0168);font-style:italic;">True</span><span class="t" style="left:299.46px;top:788.25px;font-size:14px;line-height:17px;color:#453d1c;transform:scaleX(1.0857);">05/13/20...</span><span class="t" style="left:408.37px;top:788.25px;font-size:14px;line-height:17px;color:#453d1c;transform:scaleX(1.0530);">0.6</span><span class="t" style="left:474.47px;top:788.25px;font-size:14px;line-height:17px;color:#453d1c;transform:scaleX(1.0530);">0.0</span><span class="t" style="left:604.47px;top:788.25px;font-size:14px;line-height:17px;color:#453d1c;transform:scaleX(1.0530);">0.0</span><span class="t" style="left:741.60px;top:788.25px;font-size:14px;line-height:17px;color:#453d1c;transform:scaleX(1.1058);">ifra...</span><span class="t" style="left:794.63px;top:788.25px;font-size:14px;line-height:17px;color:#453d1c;transform:scaleX(0.9371);font-style:italic;">False</span><span class="t" style="left:865.53px;top:788.25px;font-size:14px;line-height:17px;color:#453d1c;transform:scaleX(1.0168);font-style:italic;">True</span><span class="t" style="left:921.93px;top:788.25px;font-size:14px;line-height:17px;color:#453d1c;transform:scaleX(0.9206);font-style:italic;">False</span><span class="t" style="left:986.76px;top:788.25px;font-size:14px;line-height:17px;color:#453d1c;transform:scaleX(1.0530);">6641e0d555e793005221935f</span><span class="t" style="left:1230.63px;top:788.25px;font-size:14px;line-height:17px;color:#453d1c;transform:scaleX(0.9371);font-style:italic;">False</span><span class="t" style="left:1372.75px;top:788.25px;font-size:14px;line-height:17px;color:#453d1c;transform:scaleX(1.1115);">non-blocking</span><span class="t" style="left:1611.78px;top:788.25px;font-size:14px;line-height:17px;color:#453d1c;transform:scaleX(1.0168);font-style:italic;">True</span><span class="t" style="left:299.46px;top:823.25px;font-size:14px;line-height:17px;color:#453d1c;transform:scaleX(1.0857);">05/13/20...</span><span class="t" style="left:408.16px;top:823.25px;font-size:14px;line-height:17px;color:#453d1c;transform:scaleX(1.0530);">6.0e-3</span><span class="t" style="left:474.47px;top:823.25px;font-size:14px;line-height:17px;color:#453d1c;transform:scaleX(1.0530);">0.0</span><span class="t" style="left:604.47px;top:823.25px;font-size:14px;line-height:17px;color:#453d1c;transform:scaleX(1.0530);">0.0</span><span class="t" style="left:741.52px;top:823.25px;font-size:14px;line-height:17px;color:#453d1c;transform:scaleX(1.0847);">navi...</span><span class="t" style="left:794.63px;top:823.25px;font-size:14px;line-height:17px;color:#453d1c;transform:scaleX(0.9371);font-style:italic;">False</span><span class="t" style="left:865.53px;top:823.25px;font-size:14px;line-height:17px;color:#453d1c;transform:scaleX(1.0168);font-style:italic;">True</span><span class="t" style="left:921.76px;top:823.25px;font-size:14px;line-height:17px;color:#453d1c;transform:scaleX(1.0360);font-style:italic;">True</span><span class="t" style="left:986.76px;top:823.25px;font-size:14px;line-height:17px;color:#453d1c;transform:scaleX(1.0530);">6641e11355e793005221d0a2</span><span class="t" style="left:1230.63px;top:823.25px;font-size:14px;line-height:17px;color:#453d1c;transform:scaleX(0.9371);font-style:italic;">False</span><span class="t" style="left:1373.30px;top:824.74px;font-size:12px;line-height:14px;color:#d1ab2e;transform:scaleX(0.9877);font-style:italic;">none</span><span class="t" style="left:1611.78px;top:823.25px;font-size:14px;line-height:17px;color:#453d1c;transform:scaleX(1.0168);font-style:italic;">True</span><span class="t" style="left:299.46px;top:858.25px;font-size:14px;line-height:17px;color:#453d1c;transform:scaleX(1.0857);">05/13/20...</span><span class="t" style="left:407.85px;top:858.25px;font-size:14px;line-height:17px;color:#453d1c;transform:scaleX(1.0530);">1.0e-3</span><span class="t" style="left:474.47px;top:858.25px;font-size:14px;line-height:17px;color:#453d1c;transform:scaleX(1.0530);">0.0</span><span class="t" style="left:604.47px;top:858.25px;font-size:14px;line-height:17px;color:#453d1c;transform:scaleX(1.0530);">0.0</span><span class="t" style="left:741.52px;top:858.25px;font-size:14px;line-height:17px;color:#453d1c;transform:scaleX(1.0847);">navi...</span><span class="t" style="left:794.63px;top:858.25px;font-size:14px;line-height:17px;color:#453d1c;transform:scaleX(0.9371);font-style:italic;">False</span><span class="t" style="left:865.53px;top:858.25px;font-size:14px;line-height:17px;color:#453d1c;transform:scaleX(1.0168);font-style:italic;">True</span><span class="t" style="left:921.76px;top:858.25px;font-size:14px;line-height:17px;color:#453d1c;transform:scaleX(1.0360);font-style:italic;">True</span><span class="t" style="left:986.76px;top:858.25px;font-size:14px;line-height:17px;color:#453d1c;transform:scaleX(1.0530);">6641e0d555e7930052219360</span><span class="t" style="left:1230.63px;top:858.25px;font-size:14px;line-height:17px;color:#453d1c;transform:scaleX(0.9371);font-style:italic;">False</span><span class="t" style="left:1373.30px;top:859.74px;font-size:12px;line-height:14px;color:#d1ab2e;transform:scaleX(0.9877);font-style:italic;">none</span><span class="t" style="left:1611.78px;top:858.25px;font-size:14px;line-height:17px;color:#453d1c;transform:scaleX(1.0168);font-style:italic;">True</span><span class="t" style="left:299.46px;top:893.25px;font-size:14px;line-height:17px;color:#453d1c;transform:scaleX(1.0857);">05/13/20...</span><span class="t" style="left:408.37px;top:893.25px;font-size:14px;line-height:17px;color:#453d1c;transform:scaleX(1.0530);">0.0</span><span class="t" style="left:474.47px;top:893.25px;font-size:14px;line-height:17px;color:#453d1c;transform:scaleX(1.0530);">0.0</span><span class="t" style="left:604.47px;top:893.25px;font-size:14px;line-height:17px;color:#453d1c;transform:scaleX(1.0530);">0.0</span><span class="t" style="left:741.52px;top:893.25px;font-size:14px;line-height:17px;color:#453d1c;transform:scaleX(1.0847);">navi...</span><span class="t" style="left:794.63px;top:893.25px;font-size:14px;line-height:17px;color:#453d1c;transform:scaleX(0.9371);font-style:italic;">False</span><span class="t" style="left:865.53px;top:893.25px;font-size:14px;line-height:17px;color:#453d1c;transform:scaleX(1.0168);font-style:italic;">True</span><span class="t" style="left:921.76px;top:893.25px;font-size:14px;line-height:17px;color:#453d1c;transform:scaleX(1.0360);font-style:italic;">True</span><span class="t" style="left:986.76px;top:893.25px;font-size:14px;line-height:17px;color:#453d1c;transform:scaleX(1.0530);">6641e11355e793005221d0a2</span><span class="t" style="left:1230.63px;top:893.25px;font-size:14px;line-height:17px;color:#453d1c;transform:scaleX(0.9371);font-style:italic;">False</span><span class="t" style="left:1373.30px;top:894.74px;font-size:12px;line-height:14px;color:#d1ab2e;transform:scaleX(0.9877);font-style:italic;">none</span><span class="t" style="left:1611.78px;top:893.25px;font-size:14px;line-height:17px;color:#453d1c;transform:scaleX(1.0168);font-style:italic;">True</span><span class="t" style="left:299.46px;top:928.25px;font-size:14px;line-height:17px;color:#453d1c;transform:scaleX(1.0857);">05/13/20...</span><span class="t" style="left:408.37px;top:928.25px;font-size:14px;line-height:17px;color:#453d1c;transform:scaleX(1.0530);">0.5</span><span class="t" style="left:474.47px;top:928.25px;font-size:14px;line-height:17px;color:#453d1c;transform:scaleX(1.0530);">0.0</span><span class="t" style="left:604.47px;top:928.25px;font-size:14px;line-height:17px;color:#453d1c;transform:scaleX(1.0530);">0.0</span><span class="t" style="left:741.60px;top:928.25px;font-size:14px;line-height:17px;color:#453d1c;transform:scaleX(1.1058);">ifra...</span><span class="t" style="left:794.63px;top:928.25px;font-size:14px;line-height:17px;color:#453d1c;transform:scaleX(0.9371);font-style:italic;">False</span><span class="t" style="left:865.53px;top:928.25px;font-size:14px;line-height:17px;color:#453d1c;transform:scaleX(1.0168);font-style:italic;">True</span><span class="t" style="left:921.93px;top:928.25px;font-size:14px;line-height:17px;color:#453d1c;transform:scaleX(0.9206);font-style:italic;">False</span><span class="t" style="left:986.76px;top:928.25px;font-size:14px;line-height:17px;color:#453d1c;transform:scaleX(1.0530);">6641e11355e793005221d0a1</span><span class="t" style="left:1230.63px;top:928.25px;font-size:14px;line-height:17px;color:#453d1c;transform:scaleX(0.9371);font-style:italic;">False</span><span class="t" style="left:1373.30px;top:929.74px;font-size:12px;line-height:14px;color:#d1ab2e;transform:scaleX(0.9877);font-style:italic;">none</span><span class="t" style="left:1611.78px;top:928.25px;font-size:14px;line-height:17px;color:#453d1c;transform:scaleX(1.0168);font-style:italic;">True</span><span class="t" style="left:299.46px;top:963.25px;font-size:14px;line-height:17px;color:#453d1c;transform:scaleX(1.0857);">05/13/20...</span><span class="t" style="left:408.37px;top:963.25px;font-size:14px;line-height:17px;color:#453d1c;transform:scaleX(1.0530);">0.8</span><span class="t" style="left:474.47px;top:963.25px;font-size:14px;line-height:17px;color:#453d1c;transform:scaleX(1.0530);">0.8</span><span class="t" style="left:604.47px;top:963.25px;font-size:14px;line-height:17px;color:#453d1c;transform:scaleX(1.0530);">0.0</span><span class="t" style="left:741.52px;top:963.25px;font-size:14px;line-height:17px;color:#453d1c;transform:scaleX(1.0847);">navi...</span><span class="t" style="left:794.63px;top:963.25px;font-size:14px;line-height:17px;color:#453d1c;transform:scaleX(0.9371);font-style:italic;">False</span><span class="t" style="left:865.53px;top:963.25px;font-size:14px;line-height:17px;color:#453d1c;transform:scaleX(1.0168);font-style:italic;">True</span><span class="t" style="left:921.93px;top:963.25px;font-size:14px;line-height:17px;color:#453d1c;transform:scaleX(0.9206);font-style:italic;">False</span><span class="t" style="left:986.76px;top:963.25px;font-size:14px;line-height:17px;color:#453d1c;transform:scaleX(1.0530);">6641e11355e793005221d0a2</span><span class="t" style="left:1230.63px;top:963.25px;font-size:14px;line-height:17px;color:#453d1c;transform:scaleX(0.9371);font-style:italic;">False</span><span class="t" style="left:1373.30px;top:964.74px;font-size:12px;line-height:14px;color:#d1ab2e;transform:scaleX(0.9877);font-style:italic;">none</span><span class="t" style="left:1611.78px;top:963.25px;font-size:14px;line-height:17px;color:#453d1c;transform:scaleX(1.0168);font-style:italic;">True</span><span class="t" style="left:245.90px;top:999.74px;font-size:12px;line-height:14px;color:#d1ab2e;transform:scaleX(0.9915);font-style:italic;">none</span><span class="t" style="left:299.46px;top:998.25px;font-size:14px;line-height:17px;color:#453d1c;transform:scaleX(1.0857);">05/13/20...</span><span class="t" style="left:407.85px;top:998.25px;font-size:14px;line-height:17px;color:#453d1c;transform:scaleX(1.0530);">1.0e-3</span><span class="t" style="left:474.47px;top:998.25px;font-size:14px;line-height:17px;color:#453d1c;transform:scaleX(1.0530);">0.0</span><span class="t" style="left:604.47px;top:998.25px;font-size:14px;line-height:17px;color:#453d1c;transform:scaleX(1.0530);">0.0</span><span class="t" style="left:741.52px;top:998.25px;font-size:14px;line-height:17px;color:#453d1c;transform:scaleX(1.0847);">navi...</span><span class="t" style="left:794.63px;top:998.25px;font-size:14px;line-height:17px;color:#453d1c;transform:scaleX(0.9371);font-style:italic;">False</span><span class="t" style="left:865.53px;top:998.25px;font-size:14px;line-height:17px;color:#453d1c;transform:scaleX(1.0168);font-style:italic;">True</span><span class="t" style="left:921.76px;top:998.25px;font-size:14px;line-height:17px;color:#453d1c;transform:scaleX(1.0360);font-style:italic;">True</span><span class="t" style="left:986.76px;top:998.25px;font-size:14px;line-height:17px;color:#453d1c;transform:scaleX(1.0530);">6641e0d555e7930052219360</span><span class="t" style="left:1230.63px;top:998.25px;font-size:14px;line-height:17px;color:#453d1c;transform:scaleX(0.9371);font-style:italic;">False</span><span class="t" style="left:1373.30px;top:999.74px;font-size:12px;line-height:14px;color:#d1ab2e;transform:scaleX(0.9877);font-style:italic;">none</span><span class="t" style="left:1611.78px;top:998.25px;font-size:14px;line-height:17px;color:#453d1c;transform:scaleX(1.0168);font-style:italic;">True</span><span class="t" style="left:245.90px;top:1034.74px;font-size:12px;line-height:14px;color:#d1ab2e;transform:scaleX(0.9915);font-style:italic;">none</span><span class="t" style="left:299.46px;top:1033.25px;font-size:14px;line-height:17px;color:#453d1c;transform:scaleX(1.0857);">05/13/20...</span><span class="t" style="left:408.37px;top:1033.25px;font-size:14px;line-height:17px;color:#453d1c;transform:scaleX(1.0530);">3.0e-3</span><span class="t" style="left:474.47px;top:1033.25px;font-size:14px;line-height:17px;color:#453d1c;transform:scaleX(1.0530);">0.0</span><span class="t" style="left:604.47px;top:1033.25px;font-size:14px;line-height:17px;color:#453d1c;transform:scaleX(1.0530);">0.0</span><span class="t" style="left:741.52px;top:1033.25px;font-size:14px;line-height:17px;color:#453d1c;transform:scaleX(1.0847);">navi...</span><span class="t" style="left:794.63px;top:1033.25px;font-size:14px;line-height:17px;color:#453d1c;transform:scaleX(0.9371);font-style:italic;">False</span><span class="t" style="left:865.53px;top:1033.25px;font-size:14px;line-height:17px;color:#453d1c;transform:scaleX(1.0168);font-style:italic;">True</span><span class="t" style="left:921.76px;top:1033.25px;font-size:14px;line-height:17px;color:#453d1c;transform:scaleX(1.0360);font-style:italic;">True</span><span class="t" style="left:986.76px;top:1033.25px;font-size:14px;line-height:17px;color:#453d1c;transform:scaleX(1.0530);">6641e11355e793005221d09e</span><span class="t" style="left:1230.63px;top:1033.25px;font-size:14px;line-height:17px;color:#453d1c;transform:scaleX(0.9371);font-style:italic;">False</span><span class="t" style="left:1373.30px;top:1034.74px;font-size:12px;line-height:14px;color:#d1ab2e;transform:scaleX(0.9877);font-style:italic;">none</span><span class="t" style="left:1611.78px;top:1033.25px;font-size:14px;line-height:17px;color:#453d1c;transform:scaleX(1.0168);font-style:italic;">True</span><span class="t" style="left:245.90px;top:1069.74px;font-size:12px;line-height:14px;color:#d1ab2e;transform:scaleX(0.9915);font-style:italic;">none</span><span class="t" style="left:299.46px;top:1068.25px;font-size:14px;line-height:17px;color:#453d1c;transform:scaleX(1.0857);">05/13/20...</span><span class="t" style="left:407.85px;top:1068.25px;font-size:14px;line-height:17px;color:#453d1c;transform:scaleX(1.0530);">1.0e-3</span><span class="t" style="left:474.47px;top:1068.25px;font-size:14px;line-height:17px;color:#453d1c;transform:scaleX(1.0530);">0.0</span><span class="t" style="left:604.47px;top:1068.25px;font-size:14px;line-height:17px;color:#453d1c;transform:scaleX(1.0530);">0.0</span><span class="t" style="left:741.52px;top:1068.25px;font-size:14px;line-height:17px;color:#453d1c;transform:scaleX(1.0847);">navi...</span><span class="t" style="left:794.63px;top:1068.25px;font-size:14px;line-height:17px;color:#453d1c;transform:scaleX(0.9371);font-style:italic;">False</span><span class="t" style="left:865.53px;top:1068.25px;font-size:14px;line-height:17px;color:#453d1c;transform:scaleX(1.0168);font-style:italic;">True</span><span class="t" style="left:921.76px;top:1068.25px;font-size:14px;line-height:17px;color:#453d1c;transform:scaleX(1.0360);font-style:italic;">True</span><span class="t" style="left:986.76px;top:1068.25px;font-size:14px;line-height:17px;color:#453d1c;transform:scaleX(1.0530);">6641e0d555e7930052219360</span><span class="t" style="left:1230.63px;top:1068.25px;font-size:14px;line-height:17px;color:#453d1c;transform:scaleX(0.9371);font-style:italic;">False</span><span class="t" style="left:1372.75px;top:1068.25px;font-size:14px;line-height:17px;color:#453d1c;transform:scaleX(1.1115);">non-blocking</span><span class="t" style="left:1611.78px;top:1068.25px;font-size:14px;line-height:17px;color:#453d1c;transform:scaleX(1.0168);font-style:italic;">True</span><svg width="1617" height="1100" viewBox="0 0 1617 1100"><g transform="translate(0 394)"><g fill="#ad8614"><path d="M116.6 7.7c5.7 0 10.3 3.5 10.3 7.9s-4.6 7.9-10.3 7.9c-1 0-2-.1-2.9-.3-1.700 1.500-4.100 2.400-7.400 2.300 1.700-1.300 2.600-2.800 2.900-4.500-1.800-1.400-2.900-3.300-2.900-5.400 0-4.400 4.600-7.900 10.300-7.900z"/><g fill="#f9d23f"><circle cx="111.6" cy="15.800" r="1.35"/><circle cx="116.6" cy="15.800" r="1.35"/><circle cx="121.6" cy="15.800" r="1.35"/></g></g><g><path fill="#76631f" d="M186.4 8.700a1.600 1.600 0 0 1 2.800 0l8.400 14.100a1.500 1.500 0 0 1-1.300 2.200h-17a1.500 1.500 0 0 1-1.300-2.200z"/><path fill="#f9d23f" d="M186.500 13.400h2.600l-.35 5.700h-1.900zM186.600 20.300h2.400v2.300h-2.400z"/></g><g><circle cx="393.95" cy="15.100" r="9.200" fill="#1f1a0b"/><g fill="#f9d23f" transform="translate(393.95 15.100)"><circle cx="0.050" cy="-3.900" r="1.500"/><path d="M-2.850 -1.500H1.350V3H3.150V4.700H-3.050V3H-1.050V0.300H-2.850z"/></g></g><rect x="1532" y="5" width="9" height="18" fill="#d0c870"/><rect x="1541" y="5" width="9" height="18" fill="#b49b80"/><rect x="1550" y="5" width="8" height="18" fill="#a3a86c"/><rect x="1558" y="5" width="9" height="18" fill="#cfc477"/><rect x="1567" y="5" width="9" height="18" fill="#817940"/><rect x="1576" y="5" width="9" height="18" fill="#dda055"/><rect x="1585" y="5" width="8" height="18" fill="#d3c673"/><rect x="1593" y="5" width="9" height="18" fill="#9b9f7f"/></g><g transform="translate(0 429)"><g fill="#ad8614"><path d="M116.6 7.7c5.7 0 10.3 3.5 10.3 7.9s-4.6 7.9-10.3 7.9c-1 0-2-.1-2.9-.3-1.700 1.500-4.100 2.400-7.400 2.300 1.700-1.300 2.600-2.800 2.900-4.500-1.800-1.400-2.900-3.300-2.900-5.400 0-4.400 4.600-7.900 10.300-7.900z"/><g fill="#f9d23f"><circle cx="111.6" cy="15.800" r="1.35"/><circle cx="116.6" cy="15.800" r="1.35"/><circle cx="121.6" cy="15.800" r="1.35"/></g></g><g><path fill="#76631f" d="M186.4 8.700a1.600 1.600 0 0 1 2.800 0l8.400 14.100a1.500 1.500 0 0 1-1.300 2.200h-17a1.500 1.500 0 0 1-1.300-2.200z"/><path fill="#f9d23f" d="M186.500 13.400h2.600l-.35 5.700h-1.900zM186.600 20.300h2.400v2.300h-2.400z"/></g><g><circle cx="393.95" cy="15.100" r="9.200" fill="#1f1a0b"/><g fill="#f9d23f" transform="translate(393.95 15.100)"><circle cx="0.050" cy="-3.900" r="1.500"/><path d="M-2.850 -1.500H1.350V3H3.150V4.700H-3.050V3H-1.050V0.300H-2.850z"/></g></g><rect x="1532" y="5" width="9" height="18" fill="#d0c870"/><rect x="1541" y="5" width="9" height="18" fill="#b49b80"/><rect x="1550" y="5" width="8" height="18" fill="#a3a86c"/><rect x="1558" y="5" width="9" height="18" fill="#cfc477"/><rect x="1567" y="5" width="9" height="18" fill="#817940"/><rect x="1576" y="5" width="9" height="18" fill="#dda055"/><rect x="1585" y="5" width="8" height="18" fill="#d3c673"/><rect x="1593" y="5" width="9" height="18" fill="#9b9f7f"/></g><g transform="translate(0 464)"><g fill="#ad8614"><path d="M116.6 7.7c5.7 0 10.3 3.5 10.3 7.9s-4.6 7.9-10.3 7.9c-1 0-2-.1-2.9-.3-1.700 1.500-4.100 2.400-7.400 2.300 1.700-1.300 2.600-2.800 2.900-4.500-1.800-1.400-2.900-3.300-2.900-5.400 0-4.400 4.600-7.900 10.300-7.900z"/><g fill="#f9d23f"><circle cx="111.6" cy="15.800" r="1.35"/><circle cx="116.6" cy="15.800" r="1.35"/><circle cx="121.6" cy="15.800" r="1.35"/></g></g><g><path fill="#76631f" d="M186.4 8.700a1.600 1.600 0 0 1 2.800 0l8.400 14.100a1.500 1.500 0 0 1-1.300 2.200h-17a1.500 1.500 0 0 1-1.300-2.200z"/><path fill="#f9d23f" d="M186.500 13.400h2.600l-.35 5.700h-1.900zM186.600 20.300h2.400v2.300h-2.400z"/></g><g><circle cx="259" cy="16.300" r="9.100" fill="none" stroke="#4da5f6" stroke-width="1.900"/><path fill="#4da5f6" d="M255.800 11.300l8 5-8 5z"/></g><g><circle cx="393.95" cy="15.100" r="9.200" fill="#1f1a0b"/><g fill="#f9d23f" transform="translate(393.95 15.100)"><circle cx="0.050" cy="-3.900" r="1.500"/><path d="M-2.850 -1.500H1.350V3H3.150V4.700H-3.050V3H-1.050V0.300H-2.850z"/></g></g><rect x="1532" y="5" width="9" height="18" fill="#d3bf6f"/><rect x="1541" y="5" width="9" height="18" fill="#817940"/><rect x="1550" y="5" width="8" height="18" fill="#8c9768"/><rect x="1558" y="5" width="9" height="18" fill="#9b9f7f"/><rect x="1567" y="5" width="9" height="18" fill="#cfc67a"/><rect x="1576" y="5" width="9" height="18" fill="#cfc67a"/><rect x="1585" y="5" width="8" height="18" fill="#d6bf6f"/><rect x="1593" y="5" width="9" height="18" fill="#bb8c62"/></g><g transform="translate(0 499)"><g fill="#ad8614"><path d="M116.6 7.7c5.7 0 10.3 3.5 10.3 7.9s-4.6 7.9-10.3 7.9c-1 0-2-.1-2.9-.3-1.700 1.500-4.100 2.400-7.400 2.300 1.700-1.300 2.600-2.800 2.900-4.500-1.800-1.400-2.900-3.300-2.900-5.400 0-4.400 4.600-7.900 10.300-7.900z"/><g fill="#f9d23f"><circle cx="111.6" cy="15.800" r="1.35"/><circle cx="116.6" cy="15.800" r="1.35"/><circle cx="121.6" cy="15.800" r="1.35"/></g></g><g><path fill="#76631f" d="M186.4 8.700a1.600 1.600 0 0 1 2.800 0l8.400 14.100a1.500 1.500 0 0 1-1.300 2.200h-17a1.500 1.500 0 0 1-1.300-2.200z"/><path fill="#f9d23f" d="M186.500 13.400h2.600l-.35 5.700h-1.900zM186.600 20.300h2.400v2.300h-2.400z"/></g><g><circle cx="393.95" cy="15.100" r="9.200" fill="#1f1a0b"/><g fill="#f9d23f" transform="translate(393.95 15.100)"><circle cx="0.050" cy="-3.900" r="1.500"/><path d="M-2.850 -1.500H1.350V3H3.150V4.700H-3.050V3H-1.050V0.300H-2.850z"/></g></g><rect x="1532" y="5" width="9" height="18" fill="#b49b80"/><rect x="1541" y="5" width="9" height="18" fill="#9b9f7f"/><rect x="1550" y="5" width="8" height="18" fill="#cfc477"/><rect x="1558" y="5" width="9" height="18" fill="#bb8c62"/><rect x="1567" y="5" width="9" height="18" fill="#9d9650"/><rect x="1576" y="5" width="9" height="18" fill="#9d9650"/><rect x="1585" y="5" width="8" height="18" fill="#b49b80"/><rect x="1593" y="5" width="9" height="18" fill="#b0944c"/></g><g transform="translate(0 534)"><g fill="#ad8614"><path d="M116.6 7.7c5.7 0 10.3 3.5 10.3 7.9s-4.6 7.9-10.3 7.9c-1 0-2-.1-2.9-.3-1.700 1.500-4.100 2.400-7.400 2.300 1.700-1.300 2.600-2.800 2.900-4.500-1.800-1.400-2.900-3.300-2.900-5.400 0-4.400 4.600-7.900 10.300-7.900z"/><g fill="#f9d23f"><circle cx="111.6" cy="15.800" r="1.35"/><circle cx="116.6" cy="15.800" r="1.35"/><circle cx="121.6" cy="15.800" r="1.35"/></g></g><g><path fill="#76631f" d="M186.4 8.700a1.600 1.600 0 0 1 2.800 0l8.400 14.100a1.500 1.500 0 0 1-1.300 2.200h-17a1.500 1.500 0 0 1-1.300-2.200z"/><path fill="#f9d23f" d="M186.500 13.400h2.600l-.35 5.700h-1.900zM186.600 20.300h2.400v2.300h-2.400z"/></g><g><circle cx="259" cy="16.300" r="9.100" fill="none" stroke="#4da5f6" stroke-width="1.900"/><path fill="#4da5f6" d="M255.800 11.300l8 5-8 5z"/></g><g><circle cx="393.95" cy="15.100" r="9.200" fill="#1f1a0b"/><g fill="#f9d23f" transform="translate(393.95 15.100)"><circle cx="0.050" cy="-3.900" r="1.500"/><path d="M-2.850 -1.500H1.350V3H3.150V4.700H-3.050V3H-1.050V0.300H-2.850z"/></g></g><rect x="1532" y="5" width="9" height="18" fill="#d3bf6f"/><rect x="1541" y="5" width="9" height="18" fill="#817940"/><rect x="1550" y="5" width="8" height="18" fill="#8c9768"/><rect x="1558" y="5" width="9" height="18" fill="#9b9f7f"/><rect x="1567" y="5" width="9" height="18" fill="#cfc67a"/><rect x="1576" y="5" width="9" height="18" fill="#cfc67a"/><rect x="1585" y="5" width="8" height="18" fill="#d6bf6f"/><rect x="1593" y="5" width="9" height="18" fill="#bb8c62"/></g><g transform="translate(0 569)"><g fill="#ad8614"><path d="M116.6 7.7c5.7 0 10.3 3.5 10.3 7.9s-4.6 7.9-10.3 7.9c-1 0-2-.1-2.9-.3-1.700 1.500-4.100 2.400-7.400 2.300 1.700-1.300 2.600-2.800 2.900-4.500-1.800-1.400-2.900-3.300-2.900-5.400 0-4.400 4.600-7.900 10.300-7.900z"/><g fill="#f9d23f"><circle cx="111.6" cy="15.800" r="1.35"/><circle cx="116.6" cy="15.800" r="1.35"/><circle cx="121.6" cy="15.800" r="1.35"/></g></g><g><path fill="#76631f" d="M186.4 8.700a1.600 1.600 0 0 1 2.800 0l8.400 14.100a1.500 1.500 0 0 1-1.300 2.200h-17a1.500 1.500 0 0 1-1.300-2.200z"/><path fill="#f9d23f" d="M186.500 13.400h2.600l-.35 5.700h-1.900zM186.600 20.300h2.400v2.300h-2.400z"/></g><g><circle cx="259" cy="16.300" r="9.100" fill="none" stroke="#4da5f6" stroke-width="1.900"/><path fill="#4da5f6" d="M255.800 11.300l8 5-8 5z"/></g><g><circle cx="393.95" cy="15.100" r="9.200" fill="#1f1a0b"/><g fill="#f9d23f" transform="translate(393.95 15.100)"><circle cx="0.050" cy="-3.900" r="1.500"/><path d="M-2.850 -1.500H1.350V3H3.150V4.700H-3.050V3H-1.050V0.300H-2.850z"/></g></g><rect x="1532" y="5" width="9" height="18" fill="#d0c870"/><rect x="1541" y="5" width="9" height="18" fill="#e5b84e"/><rect x="1550" y="5" width="8" height="18" fill="#cfc477"/><rect x="1558" y="5" width="9" height="18" fill="#bb8c62"/><rect x="1567" y="5" width="9" height="18" fill="#817940"/><rect x="1576" y="5" width="9" height="18" fill="#b49b80"/><rect x="1585" y="5" width="8" height="18" fill="#c4b282"/><rect x="1593" y="5" width="9" height="18" fill="#a3a86c"/></g><g transform="translate(0 604)"><g fill="#ad8614"><path d="M116.6 7.7c5.7 0 10.3 3.5 10.3 7.9s-4.6 7.9-10.3 7.9c-1 0-2-.1-2.9-.3-1.700 1.500-4.100 2.400-7.400 2.300 1.700-1.300 2.600-2.800 2.900-4.500-1.800-1.400-2.900-3.300-2.900-5.400 0-4.400 4.600-7.900 10.300-7.900z"/><g fill="#f9d23f"><circle cx="111.6" cy="15.800" r="1.35"/><circle cx="116.6" cy="15.800" r="1.35"/><circle cx="121.6" cy="15.800" r="1.35"/></g></g><g><path fill="#76631f" d="M186.4 8.700a1.600 1.600 0 0 1 2.800 0l8.400 14.100a1.500 1.500 0 0 1-1.300 2.200h-17a1.500 1.500 0 0 1-1.300-2.200z"/><path fill="#f9d23f" d="M186.500 13.400h2.600l-.35 5.700h-1.900zM186.600 20.300h2.400v2.300h-2.400z"/></g><g><circle cx="259" cy="16.300" r="9.100" fill="none" stroke="#4da5f6" stroke-width="1.900"/><path fill="#4da5f6" d="M255.800 11.300l8 5-8 5z"/></g><g><circle cx="393.95" cy="15.100" r="9.200" fill="#1f1a0b"/><g fill="#f9d23f" transform="translate(393.95 15.100)"><circle cx="0.050" cy="-3.900" r="1.500"/><path d="M-2.850 -1.500H1.350V3H3.150V4.700H-3.050V3H-1.050V0.300H-2.850z"/></g></g><rect x="1532" y="5" width="9" height="18" fill="#dda055"/><rect x="1541" y="5" width="9" height="18" fill="#cfc477"/><rect x="1550" y="5" width="8" height="18" fill="#e5b84e"/><rect x="1558" y="5" width="9" height="18" fill="#cfc870"/><rect x="1567" y="5" width="9" height="18" fill="#bb8c62"/><rect x="1576" y="5" width="9" height="18" fill="#817940"/><rect x="1585" y="5" width="8" height="18" fill="#b0944c"/><rect x="1593" y="5" width="9" height="18" fill="#a3a86c"/></g><g transform="translate(0 639)"><g fill="#ad8614"><path d="M116.6 7.7c5.7 0 10.3 3.5 10.3 7.9s-4.6 7.9-10.3 7.9c-1 0-2-.1-2.9-.3-1.700 1.500-4.100 2.400-7.400 2.300 1.700-1.300 2.600-2.800 2.900-4.500-1.800-1.400-2.900-3.300-2.900-5.400 0-4.400 4.600-7.900 10.300-7.900z"/><g fill="#f9d23f"><circle cx="111.6" cy="15.800" r="1.35"/><circle cx="116.6" cy="15.800" r="1.35"/><circle cx="121.6" cy="15.800" r="1.35"/></g></g><g><path fill="#76631f" d="M186.4 8.700a1.600 1.600 0 0 1 2.800 0l8.400 14.100a1.500 1.500 0 0 1-1.300 2.200h-17a1.500 1.500 0 0 1-1.300-2.200z"/><path fill="#f9d23f" d="M186.500 13.400h2.600l-.35 5.700h-1.900zM186.600 20.300h2.400v2.300h-2.400z"/></g><g><circle cx="259" cy="16.300" r="9.100" fill="none" stroke="#4da5f6" stroke-width="1.900"/><path fill="#4da5f6" d="M255.800 11.300l8 5-8 5z"/></g><g><circle cx="393.95" cy="15.100" r="9.200" fill="#1f1a0b"/><g fill="#f9d23f" transform="translate(393.95 15.100)"><circle cx="0.050" cy="-3.900" r="1.500"/><path d="M-2.850 -1.500H1.350V3H3.150V4.700H-3.050V3H-1.050V0.300H-2.850z"/></g></g><rect x="1532" y="5" width="9" height="18" fill="#dda055"/><rect x="1541" y="5" width="9" height="18" fill="#cfc477"/><rect x="1550" y="5" width="8" height="18" fill="#e5b84e"/><rect x="1558" y="5" width="9" height="18" fill="#cfc870"/><rect x="1567" y="5" width="9" height="18" fill="#bb8c62"/><rect x="1576" y="5" width="9" height="18" fill="#817940"/><rect x="1585" y="5" width="8" height="18" fill="#b0944c"/><rect x="1593" y="5" width="9" height="18" fill="#a3a86c"/></g><g transform="translate(0 674)"><g fill="#ad8614"><path d="M116.6 7.7c5.7 0 10.3 3.5 10.3 7.9s-4.6 7.9-10.3 7.9c-1 0-2-.1-2.9-.3-1.700 1.500-4.100 2.400-7.400 2.300 1.700-1.300 2.600-2.800 2.900-4.500-1.800-1.400-2.900-3.300-2.900-5.400 0-4.400 4.600-7.900 10.300-7.900z"/><g fill="#f9d23f"><circle cx="111.6" cy="15.800" r="1.35"/><circle cx="116.6" cy="15.800" r="1.35"/><circle cx="121.6" cy="15.800" r="1.35"/></g></g><g><path fill="#76631f" d="M186.4 8.700a1.600 1.600 0 0 1 2.800 0l8.400 14.100a1.500 1.500 0 0 1-1.300 2.200h-17a1.500 1.500 0 0 1-1.300-2.200z"/><path fill="#f9d23f" d="M186.500 13.400h2.600l-.35 5.700h-1.900zM186.600 20.300h2.400v2.300h-2.400z"/></g><g><circle cx="259" cy="16.300" r="9.100" fill="none" stroke="#4da5f6" stroke-width="1.900"/><path fill="#4da5f6" d="M255.800 11.300l8 5-8 5z"/></g><g><circle cx="393.95" cy="15.100" r="9.200" fill="#1f1a0b"/><g fill="#f9d23f" transform="translate(393.95 15.100)"><circle cx="0.050" cy="-3.900" r="1.500"/><path d="M-2.850 -1.500H1.350V3H3.150V4.700H-3.050V3H-1.050V0.300H-2.850z"/></g></g><rect x="1532" y="5" width="9" height="18" fill="#dda055"/><rect x="1541" y="5" width="9" height="18" fill="#cfc477"/><rect x="1550" y="5" width="8" height="18" fill="#e5b84e"/><rect x="1558" y="5" width="9" height="18" fill="#cfc870"/><rect x="1567" y="5" width="9" height="18" fill="#bb8c62"/><rect x="1576" y="5" width="9" height="18" fill="#817940"/><rect x="1585" y="5" width="8" height="18" fill="#b0944c"/><rect x="1593" y="5" width="9" height="18" fill="#a3a86c"/></g><g transform="translate(0 709)"><g fill="#ad8614"><path d="M116.6 7.7c5.7 0 10.3 3.5 10.3 7.9s-4.6 7.9-10.3 7.9c-1 0-2-.1-2.9-.3-1.700 1.500-4.100 2.400-7.400 2.300 1.700-1.300 2.600-2.800 2.900-4.500-1.800-1.400-2.900-3.300-2.900-5.400 0-4.400 4.600-7.900 10.300-7.900z"/><g fill="#f9d23f"><circle cx="111.6" cy="15.800" r="1.35"/><circle cx="116.6" cy="15.800" r="1.35"/><circle cx="121.6" cy="15.800" r="1.35"/></g></g><g><path fill="#76631f" d="M186.4 8.700a1.600 1.600 0 0 1 2.800 0l8.400 14.100a1.500 1.500 0 0 1-1.300 2.200h-17a1.500 1.500 0 0 1-1.300-2.200z"/><path fill="#f9d23f" d="M186.500 13.400h2.600l-.35 5.700h-1.900zM186.600 20.300h2.400v2.300h-2.400z"/></g><g><circle cx="259" cy="16.300" r="9.100" fill="none" stroke="#4da5f6" stroke-width="1.900"/><path fill="#4da5f6" d="M255.800 11.300l8 5-8 5z"/></g><g><circle cx="393.95" cy="15.100" r="9.200" fill="#1f1a0b"/><g fill="#f9d23f" transform="translate(393.95 15.100)"><circle cx="0.050" cy="-3.900" r="1.500"/><path d="M-2.850 -1.500H1.350V3H3.150V4.700H-3.050V3H-1.050V0.300H-2.850z"/></g></g><rect x="1532" y="5" width="9" height="18" fill="#8c9768"/><rect x="1541" y="5" width="9" height="18" fill="#b49b80"/><rect x="1550" y="5" width="8" height="18" fill="#b0944c"/><rect x="1558" y="5" width="9" height="18" fill="#eba060"/><rect x="1567" y="5" width="9" height="18" fill="#e9bc50"/><rect x="1576" y="5" width="9" height="18" fill="#dda055"/><rect x="1585" y="5" width="8" height="18" fill="#d0c870"/><rect x="1593" y="5" width="9" height="18" fill="#8c7a48"/></g><g transform="translate(0 744)"><g fill="#ad8614"><path d="M116.6 7.7c5.7 0 10.3 3.5 10.3 7.9s-4.6 7.9-10.3 7.9c-1 0-2-.1-2.9-.3-1.700 1.500-4.100 2.400-7.400 2.300 1.700-1.300 2.600-2.800 2.900-4.500-1.800-1.400-2.900-3.300-2.900-5.400 0-4.400 4.600-7.900 10.300-7.900z"/><g fill="#f9d23f"><circle cx="111.6" cy="15.800" r="1.35"/><circle cx="116.6" cy="15.800" r="1.35"/><circle cx="121.6" cy="15.800" r="1.35"/></g></g><g><path fill="#76631f" d="M186.4 8.700a1.600 1.600 0 0 1 2.800 0l8.400 14.100a1.500 1.500 0 0 1-1.300 2.200h-17a1.500 1.500 0 0 1-1.300-2.200z"/><path fill="#f9d23f" d="M186.500 13.400h2.600l-.35 5.700h-1.900zM186.600 20.300h2.400v2.300h-2.400z"/></g><g><circle cx="259" cy="16.300" r="9.100" fill="none" stroke="#4da5f6" stroke-width="1.900"/><path fill="#4da5f6" d="M255.800 11.300l8 5-8 5z"/></g><g><circle cx="393.95" cy="15.100" r="9.200" fill="#1f1a0b"/><g fill="#f9d23f" transform="translate(393.95 15.100)"><circle cx="0.050" cy="-3.900" r="1.500"/><path d="M-2.850 -1.500H1.350V3H3.150V4.700H-3.050V3H-1.050V0.300H-2.850z"/></g></g><rect x="1532" y="5" width="9" height="18" fill="#dda055"/><rect x="1541" y="5" width="9" height="18" fill="#cfc477"/><rect x="1550" y="5" width="8" height="18" fill="#e5b84e"/><rect x="1558" y="5" width="9" height="18" fill="#cfc870"/><rect x="1567" y="5" width="9" height="18" fill="#bb8c62"/><rect x="1576" y="5" width="9" height="18" fill="#817940"/><rect x="1585" y="5" width="8" height="18" fill="#b0944c"/><rect x="1593" y="5" width="9" height="18" fill="#a3a86c"/></g><g transform="translate(0 779)"><g fill="#ad8614"><path d="M116.6 7.7c5.7 0 10.3 3.5 10.3 7.9s-4.6 7.9-10.3 7.9c-1 0-2-.1-2.9-.3-1.700 1.500-4.100 2.400-7.400 2.300 1.700-1.300 2.600-2.800 2.900-4.500-1.800-1.400-2.900-3.300-2.900-5.400 0-4.400 4.600-7.900 10.300-7.900z"/><g fill="#f9d23f"><circle cx="111.6" cy="15.800" r="1.35"/><circle cx="116.6" cy="15.800" r="1.35"/><circle cx="121.6" cy="15.800" r="1.35"/></g></g><g><path fill="#76631f" d="M186.4 8.700a1.600 1.600 0 0 1 2.800 0l8.400 14.100a1.500 1.500 0 0 1-1.300 2.200h-17a1.500 1.500 0 0 1-1.300-2.200z"/><path fill="#f9d23f" d="M186.500 13.400h2.600l-.35 5.700h-1.900zM186.600 20.300h2.400v2.300h-2.400z"/></g><g><circle cx="259" cy="16.300" r="9.100" fill="none" stroke="#4da5f6" stroke-width="1.900"/><path fill="#4da5f6" d="M255.800 11.300l8 5-8 5z"/></g><g><circle cx="393.95" cy="15.100" r="9.200" fill="#1f1a0b"/><g fill="#f9d23f" transform="translate(393.95 15.100)"><circle cx="0.050" cy="-3.900" r="1.500"/><path d="M-2.850 -1.500H1.350V3H3.150V4.700H-3.050V3H-1.050V0.300H-2.850z"/></g></g><rect x="1532" y="5" width="9" height="18" fill="#dda055"/><rect x="1541" y="5" width="9" height="18" fill="#cfc477"/><rect x="1550" y="5" width="8" height="18" fill="#e5b84e"/><rect x="1558" y="5" width="9" height="18" fill="#cfc870"/><rect x="1567" y="5" width="9" height="18" fill="#bb8c62"/><rect x="1576" y="5" width="9" height="18" fill="#817940"/><rect x="1585" y="5" width="8" height="18" fill="#b0944c"/><rect x="1593" y="5" width="9" height="18" fill="#a3a86c"/></g><g transform="translate(0 814)"><g fill="#ad8614"><path d="M116.6 7.7c5.7 0 10.3 3.5 10.3 7.9s-4.6 7.9-10.3 7.9c-1 0-2-.1-2.9-.3-1.700 1.500-4.100 2.400-7.400 2.300 1.700-1.300 2.600-2.800 2.900-4.500-1.800-1.400-2.900-3.300-2.900-5.400 0-4.400 4.600-7.900 10.300-7.900z"/><g fill="#f9d23f"><circle cx="111.6" cy="15.800" r="1.35"/><circle cx="116.6" cy="15.800" r="1.35"/><circle cx="121.6" cy="15.800" r="1.35"/></g></g><g><path fill="#76631f" d="M186.4 8.700a1.600 1.600 0 0 1 2.800 0l8.400 14.100a1.500 1.500 0 0 1-1.300 2.200h-17a1.500 1.500 0 0 1-1.300-2.200z"/><path fill="#f9d23f" d="M186.500 13.400h2.600l-.35 5.700h-1.900zM186.600 20.300h2.400v2.300h-2.400z"/></g><g><circle cx="259" cy="16.300" r="9.100" fill="none" stroke="#4da5f6" stroke-width="1.900"/><path fill="#4da5f6" d="M255.800 11.300l8 5-8 5z"/></g><g><circle cx="393.95" cy="15.100" r="9.200" fill="#1f1a0b"/><g fill="#f9d23f" transform="translate(393.95 15.100)"><circle cx="0.050" cy="-3.900" r="1.500"/><path d="M-2.850 -1.500H1.350V3H3.150V4.700H-3.050V3H-1.050V0.300H-2.850z"/></g></g><rect x="1532" y="5" width="9" height="18" fill="#8c9768"/><rect x="1541" y="5" width="9" height="18" fill="#b49b80"/><rect x="1550" y="5" width="8" height="18" fill="#b0944c"/><rect x="1558" y="5" width="9" height="18" fill="#eba060"/><rect x="1567" y="5" width="9" height="18" fill="#e9bc50"/><rect x="1576" y="5" width="9" height="18" fill="#dda055"/><rect x="1585" y="5" width="8" height="18" fill="#d0c870"/><rect x="1593" y="5" width="9" height="18" fill="#8c7a48"/></g><g transform="translate(0 849)"><g fill="#ad8614"><path d="M116.6 7.7c5.7 0 10.3 3.5 10.3 7.9s-4.6 7.9-10.3 7.9c-1 0-2-.1-2.9-.3-1.700 1.500-4.100 2.400-7.400 2.300 1.700-1.300 2.600-2.800 2.900-4.500-1.800-1.400-2.900-3.300-2.900-5.400 0-4.400 4.600-7.900 10.300-7.900z"/><g fill="#f9d23f"><circle cx="111.6" cy="15.800" r="1.35"/><circle cx="116.6" cy="15.800" r="1.35"/><circle cx="121.6" cy="15.800" r="1.35"/></g></g><g><path fill="#76631f" d="M186.4 8.700a1.600 1.600 0 0 1 2.800 0l8.400 14.100a1.500 1.500 0 0 1-1.300 2.200h-17a1.500 1.500 0 0 1-1.300-2.200z"/><path fill="#f9d23f" d="M186.500 13.400h2.600l-.35 5.700h-1.900zM186.600 20.300h2.400v2.300h-2.400z"/></g><g><circle cx="259" cy="16.300" r="9.100" fill="none" stroke="#4da5f6" stroke-width="1.900"/><path fill="#4da5f6" d="M255.800 11.300l8 5-8 5z"/></g><g><circle cx="393.95" cy="15.100" r="9.200" fill="#1f1a0b"/><g fill="#f9d23f" transform="translate(393.95 15.100)"><circle cx="0.050" cy="-3.900" r="1.500"/><path d="M-2.850 -1.500H1.350V3H3.150V4.700H-3.050V3H-1.050V0.300H-2.850z"/></g></g><rect x="1532" y="5" width="9" height="18" fill="#8c9768"/><rect x="1541" y="5" width="9" height="18" fill="#b49b80"/><rect x="1550" y="5" width="8" height="18" fill="#b0944c"/><rect x="1558" y="5" width="9" height="18" fill="#eba060"/><rect x="1567" y="5" width="9" height="18" fill="#e9bc50"/><rect x="1576" y="5" width="9" height="18" fill="#dda055"/><rect x="1585" y="5" width="8" height="18" fill="#d0c870"/><rect x="1593" y="5" width="9" height="18" fill="#8c7a48"/></g><g transform="translate(0 884)"><g fill="#ad8614"><path d="M116.6 7.7c5.7 0 10.3 3.5 10.3 7.9s-4.6 7.9-10.3 7.9c-1 0-2-.1-2.9-.3-1.700 1.500-4.100 2.400-7.400 2.300 1.700-1.300 2.600-2.800 2.900-4.500-1.800-1.400-2.900-3.300-2.900-5.400 0-4.400 4.600-7.900 10.300-7.900z"/><g fill="#f9d23f"><circle cx="111.6" cy="15.800" r="1.35"/><circle cx="116.6" cy="15.800" r="1.35"/><circle cx="121.6" cy="15.800" r="1.35"/></g></g><g><path fill="#76631f" d="M186.4 8.700a1.600 1.600 0 0 1 2.800 0l8.400 14.100a1.500 1.500 0 0 1-1.300 2.200h-17a1.500 1.500 0 0 1-1.300-2.200z"/><path fill="#f9d23f" d="M186.500 13.400h2.600l-.35 5.700h-1.900zM186.600 20.300h2.400v2.300h-2.400z"/></g><g><circle cx="259" cy="16.300" r="9.100" fill="none" stroke="#4da5f6" stroke-width="1.900"/><path fill="#4da5f6" d="M255.800 11.300l8 5-8 5z"/></g><g><circle cx="393.95" cy="15.100" r="9.200" fill="#1f1a0b"/><g fill="#f9d23f" transform="translate(393.95 15.100)"><circle cx="0.050" cy="-3.900" r="1.500"/><path d="M-2.850 -1.500H1.350V3H3.150V4.700H-3.050V3H-1.050V0.300H-2.850z"/></g></g><rect x="1532" y="5" width="9" height="18" fill="#8c9768"/><rect x="1541" y="5" width="9" height="18" fill="#b49b80"/><rect x="1550" y="5" width="8" height="18" fill="#b0944c"/><rect x="1558" y="5" width="9" height="18" fill="#eba060"/><rect x="1567" y="5" width="9" height="18" fill="#e9bc50"/><rect x="1576" y="5" width="9" height="18" fill="#dda055"/><rect x="1585" y="5" width="8" height="18" fill="#d0c870"/><rect x="1593" y="5" width="9" height="18" fill="#8c7a48"/></g><g transform="translate(0 919)"><g fill="#ad8614"><path d="M116.6 7.7c5.7 0 10.3 3.5 10.3 7.9s-4.6 7.9-10.3 7.9c-1 0-2-.1-2.9-.3-1.700 1.500-4.100 2.400-7.400 2.300 1.700-1.300 2.600-2.800 2.900-4.500-1.800-1.400-2.900-3.300-2.900-5.400 0-4.400 4.600-7.900 10.300-7.900z"/><g fill="#f9d23f"><circle cx="111.6" cy="15.800" r="1.35"/><circle cx="116.6" cy="15.800" r="1.35"/><circle cx="121.6" cy="15.800" r="1.35"/></g></g><g><path fill="#76631f" d="M186.4 8.700a1.600 1.600 0 0 1 2.800 0l8.400 14.100a1.500 1.500 0 0 1-1.300 2.200h-17a1.500 1.500 0 0 1-1.300-2.200z"/><path fill="#f9d23f" d="M186.500 13.400h2.600l-.35 5.700h-1.900zM186.600 20.300h2.400v2.300h-2.400z"/></g><g><circle cx="259" cy="16.300" r="9.100" fill="none" stroke="#4da5f6" stroke-width="1.900"/><path fill="#4da5f6" d="M255.800 11.300l8 5-8 5z"/></g><g><circle cx="393.95" cy="15.100" r="9.200" fill="#1f1a0b"/><g fill="#f9d23f" transform="translate(393.95 15.100)"><circle cx="0.050" cy="-3.900" r="1.500"/><path d="M-2.850 -1.500H1.350V3H3.150V4.700H-3.050V3H-1.050V0.300H-2.850z"/></g></g><rect x="1532" y="5" width="9" height="18" fill="#8c9768"/><rect x="1541" y="5" width="9" height="18" fill="#b49b80"/><rect x="1550" y="5" width="8" height="18" fill="#b0944c"/><rect x="1558" y="5" width="9" height="18" fill="#eba060"/><rect x="1567" y="5" width="9" height="18" fill="#e9bc50"/><rect x="1576" y="5" width="9" height="18" fill="#dda055"/><rect x="1585" y="5" width="8" height="18" fill="#d0c870"/><rect x="1593" y="5" width="9" height="18" fill="#8c7a48"/></g><g transform="translate(0 954)"><g fill="#ad8614"><path d="M116.6 7.7c5.7 0 10.3 3.5 10.3 7.9s-4.6 7.9-10.3 7.9c-1 0-2-.1-2.9-.3-1.700 1.500-4.100 2.400-7.400 2.300 1.700-1.300 2.600-2.800 2.900-4.500-1.800-1.400-2.900-3.300-2.900-5.400 0-4.400 4.600-7.900 10.300-7.900z"/><g fill="#f9d23f"><circle cx="111.6" cy="15.800" r="1.35"/><circle cx="116.6" cy="15.800" r="1.35"/><circle cx="121.6" cy="15.800" r="1.35"/></g></g><g><path fill="#76631f" d="M186.4 8.700a1.600 1.600 0 0 1 2.800 0l8.400 14.100a1.500 1.500 0 0 1-1.300 2.200h-17a1.500 1.500 0 0 1-1.300-2.200z"/><path fill="#f9d23f" d="M186.500 13.400h2.600l-.35 5.700h-1.900zM186.600 20.300h2.400v2.300h-2.400z"/></g><g><circle cx="259" cy="16.300" r="9.100" fill="none" stroke="#4da5f6" stroke-width="1.900"/><path fill="#4da5f6" d="M255.800 11.300l8 5-8 5z"/></g><g><circle cx="393.95" cy="15.100" r="9.200" fill="#1f1a0b"/><g fill="#f9d23f" transform="translate(393.95 15.100)"><circle cx="0.050" cy="-3.900" r="1.500"/><path d="M-2.850 -1.500H1.350V3H3.150V4.700H-3.050V3H-1.050V0.300H-2.850z"/></g></g><rect x="1532" y="5" width="9" height="18" fill="#8c9768"/><rect x="1541" y="5" width="9" height="18" fill="#b49b80"/><rect x="1550" y="5" width="8" height="18" fill="#b0944c"/><rect x="1558" y="5" width="9" height="18" fill="#eba060"/><rect x="1567" y="5" width="9" height="18" fill="#e9bc50"/><rect x="1576" y="5" width="9" height="18" fill="#dda055"/><rect x="1585" y="5" width="8" height="18" fill="#d0c870"/><rect x="1593" y="5" width="9" height="18" fill="#8c7a48"/></g><g transform="translate(0 989)"><g fill="#ad8614"><path d="M116.6 7.7c5.7 0 10.3 3.5 10.3 7.9s-4.6 7.9-10.3 7.9c-1 0-2-.1-2.9-.3-1.700 1.500-4.100 2.400-7.400 2.300 1.700-1.300 2.600-2.800 2.900-4.500-1.800-1.400-2.900-3.300-2.900-5.400 0-4.400 4.600-7.900 10.300-7.900z"/><g fill="#f9d23f"><circle cx="111.6" cy="15.800" r="1.35"/><circle cx="116.6" cy="15.800" r="1.35"/><circle cx="121.6" cy="15.800" r="1.35"/></g></g><g><path fill="#76631f" d="M186.4 8.700a1.600 1.600 0 0 1 2.800 0l8.400 14.100a1.500 1.500 0 0 1-1.300 2.200h-17a1.500 1.500 0 0 1-1.300-2.200z"/><path fill="#f9d23f" d="M186.500 13.400h2.600l-.35 5.700h-1.900zM186.600 20.300h2.400v2.300h-2.400z"/></g><g><circle cx="393.95" cy="15.100" r="9.200" fill="#1f1a0b"/><g fill="#f9d23f" transform="translate(393.95 15.100)"><circle cx="0.050" cy="-3.900" r="1.500"/><path d="M-2.850 -1.500H1.350V3H3.150V4.700H-3.050V3H-1.050V0.300H-2.850z"/></g></g><rect x="1532" y="5" width="9" height="18" fill="#d3bc6f"/><rect x="1541" y="5" width="9" height="18" fill="#eba060"/><rect x="1550" y="5" width="8" height="18" fill="#b0944c"/><rect x="1558" y="5" width="9" height="18" fill="#cfc870"/><rect x="1567" y="5" width="9" height="18" fill="#a3a86c"/><rect x="1576" y="5" width="9" height="18" fill="#9b9f7f"/><rect x="1585" y="5" width="8" height="18" fill="#e5b84e"/><rect x="1593" y="5" width="9" height="18" fill="#eba060"/></g><g transform="translate(0 1024)"><g fill="#ad8614"><path d="M116.6 7.7c5.7 0 10.3 3.5 10.3 7.9s-4.6 7.9-10.3 7.9c-1 0-2-.1-2.9-.3-1.700 1.500-4.100 2.400-7.400 2.300 1.700-1.300 2.600-2.800 2.900-4.500-1.800-1.400-2.900-3.300-2.900-5.400 0-4.400 4.600-7.900 10.300-7.900z"/><g fill="#f9d23f"><circle cx="111.6" cy="15.800" r="1.35"/><circle cx="116.6" cy="15.800" r="1.35"/><circle cx="121.6" cy="15.800" r="1.35"/></g></g><g><path fill="#76631f" d="M186.4 8.700a1.600 1.600 0 0 1 2.800 0l8.400 14.100a1.500 1.500 0 0 1-1.300 2.200h-17a1.500 1.500 0 0 1-1.300-2.200z"/><path fill="#f9d23f" d="M186.500 13.400h2.600l-.35 5.700h-1.900zM186.600 20.300h2.400v2.300h-2.400z"/></g><g><circle cx="393.95" cy="15.100" r="9.200" fill="#1f1a0b"/><g fill="#f9d23f" transform="translate(393.95 15.100)"><circle cx="0.050" cy="-3.900" r="1.500"/><path d="M-2.850 -1.500H1.350V3H3.150V4.700H-3.050V3H-1.050V0.300H-2.850z"/></g></g><rect x="1532" y="5" width="9" height="18" fill="#d3bc6f"/><rect x="1541" y="5" width="9" height="18" fill="#eba060"/><rect x="1550" y="5" width="8" height="18" fill="#b0944c"/><rect x="1558" y="5" width="9" height="18" fill="#cfc870"/><rect x="1567" y="5" width="9" height="18" fill="#a3a86c"/><rect x="1576" y="5" width="9" height="18" fill="#9b9f7f"/><rect x="1585" y="5" width="8" height="18" fill="#e5b84e"/><rect x="1593" y="5" width="9" height="18" fill="#eba060"/></g><g transform="translate(0 1059)"><g fill="#ad8614"><path d="M116.6 7.7c5.7 0 10.3 3.5 10.3 7.9s-4.6 7.9-10.3 7.9c-1 0-2-.1-2.9-.3-1.700 1.500-4.100 2.400-7.400 2.300 1.700-1.300 2.600-2.800 2.900-4.500-1.800-1.400-2.900-3.300-2.900-5.400 0-4.400 4.600-7.900 10.300-7.900z"/><g fill="#f9d23f"><circle cx="111.6" cy="15.800" r="1.35"/><circle cx="116.6" cy="15.800" r="1.35"/><circle cx="121.6" cy="15.800" r="1.35"/></g></g><g><path fill="#76631f" d="M186.4 8.700a1.600 1.600 0 0 1 2.800 0l8.400 14.100a1.500 1.500 0 0 1-1.300 2.200h-17a1.500 1.500 0 0 1-1.300-2.200z"/><path fill="#f9d23f" d="M186.500 13.400h2.600l-.35 5.700h-1.900zM186.600 20.300h2.400v2.300h-2.400z"/></g><g><circle cx="393.95" cy="15.100" r="9.200" fill="#1f1a0b"/><g fill="#f9d23f" transform="translate(393.95 15.100)"><circle cx="0.050" cy="-3.900" r="1.500"/><path d="M-2.850 -1.500H1.350V3H3.150V4.700H-3.050V3H-1.050V0.300H-2.850z"/></g></g><rect x="1532" y="5" width="9" height="18" fill="#dda055"/><rect x="1541" y="5" width="9" height="18" fill="#c4b282"/><rect x="1550" y="5" width="8" height="18" fill="#9a9550"/><rect x="1558" y="5" width="9" height="18" fill="#a3a86c"/><rect x="1567" y="5" width="9" height="18" fill="#8c7a48"/><rect x="1576" y="5" width="9" height="18" fill="#817940"/><rect x="1585" y="5" width="8" height="18" fill="#eba060"/><rect x="1593" y="5" width="9" height="18" fill="#eba060"/></g></svg></div><svg width="1617" height="1171" viewBox="0 0 1617 1171"><path d="M951.9 152.4C955.55 152.72 966.54 153.38 973.8 154.31C981.07 155.25 988.3 156.53 995.47 158.02C1002.65 159.5 1009.75 161.35 1016.84 163.23C1023.92 165.11 1030.99 167.1 1037.98 169.3C1044.97 171.5 1051.9 173.9 1058.78 176.45C1065.65 178.99 1072.45 181.76 1079.22 184.58C1085.98 187.4 1092.71 190.33 1099.38 193.37C1106.06 196.4 1112.7 199.52 1119.26 202.78C1125.83 206.04 1132.32 209.46 1138.78 212.92C1145.25 216.37 1151.68 219.9 1158.06 223.51C1164.44 227.13 1170.82 230.76 1177.07 234.59C1183.31 238.42 1189.53 242.33 1195.54 246.51C1201.55 250.7 1207.35 255.21 1213.14 259.7C1218.93 264.19 1224.64 268.8 1230.3 273.46C1235.96 278.12 1241.55 282.88 1247.1 287.66C1252.66 292.45 1258.27 297.17 1263.64 302.16C1269 307.15 1274.11 312.43 1279.3 317.6C1284.49 322.78 1289.73 327.92 1294.8 333.21C1299.87 338.51 1304.84 343.9 1309.73 349.37C1314.61 354.84 1319.43 360.37 1324.1 366.02C1328.76 371.67 1333.35 377.4 1337.71 383.29C1342.06 389.18 1346.18 395.26 1350.24 401.37C1354.3 407.47 1358.25 413.65 1362.08 419.91C1365.9 426.16 1369.61 432.49 1373.17 438.9C1376.73 445.31 1380.14 451.8 1383.43 458.35C1386.71 464.91 1389.67 471.62 1392.88 478.21C1396.09 484.8 1399.64 491.23 1402.68 497.89C1405.73 504.55 1408.44 511.36 1411.15 518.16C1413.86 524.97 1416.69 531.75 1418.96 538.71C1421.22 545.67 1423.14 552.77 1424.73 559.91C1426.32 567.06 1427.54 574.31 1428.48 581.57C1429.42 588.82 1430.03 596.15 1430.37 603.47C1430.71 610.78 1430.7 618.13 1430.51 625.45C1430.31 632.78 1429.92 640.12 1429.21 647.41C1428.51 654.69 1427.55 661.98 1426.27 669.19C1425 676.4 1423.25 683.53 1421.56 690.67C1419.88 697.8 1418.09 704.92 1416.18 711.99C1414.27 719.07 1412.33 726.14 1410.11 733.12C1407.89 740.11 1405.49 747.05 1402.88 753.9C1400.27 760.74 1397.38 767.48 1394.45 774.2C1391.53 780.92 1388.46 787.58 1385.31 794.21C1382.17 800.83 1378.84 807.37 1375.58 813.94C1372.32 820.5 1369.04 827.06 1365.76 833.62C1362.47 840.18 1359.28 846.78 1355.88 853.28C1352.49 859.78 1348.95 866.2 1345.39 872.61C1341.83 879.02 1338.22 885.4 1334.53 891.74C1330.84 898.07 1327.06 904.36 1323.24 910.62C1319.42 916.88 1315.56 923.11 1311.62 929.3C1307.68 935.48 1303.73 941.67 1299.6 947.73C1295.48 953.78 1291.19 959.73 1286.86 965.64C1282.52 971.55 1278.03 977.36 1273.57 983.17C1269.1 988.99 1264.6 994.78 1260.06 1000.53C1255.51 1006.29 1250.93 1012.01 1246.3 1017.7C1241.67 1023.39 1237 1029.04 1232.28 1034.65C1227.56 1040.27 1222.84 1045.88 1217.99 1051.37C1213.13 1056.87 1208.17 1062.27 1203.15 1067.61C1198.13 1072.95 1193.1 1078.3 1187.88 1083.44C1182.66 1088.58 1177.37 1093.7 1171.81 1098.45C1166.25 1103.21 1160.44 1107.67 1154.52 1111.97C1148.6 1116.27 1142.46 1120.32 1136.28 1124.26C1130.1 1128.2 1123.83 1132.01 1117.44 1135.6C1111.05 1139.19 1104.58 1142.69 1097.96 1145.79C1091.34 1148.9 1084.63 1152.06 1077.71 1154.24C1070.79 1156.42 1063.39 1158.99 1056.44 1158.88C1049.48 1158.77 1042.03 1156.92 1035.99 1153.56C1029.94 1150.2 1025.09 1144.04 1020.16 1138.71C1015.22 1133.37 1010.93 1127.31 1006.39 1121.55C1001.86 1115.79 997.39 1109.98 992.92 1104.16C988.45 1098.35 983.99 1092.53 979.59 1086.66C975.2 1080.79 970.85 1074.88 966.54 1068.95C962.23 1063.02 957.92 1057.08 953.75 1051.06C949.57 1045.03 945.49 1038.93 941.5 1032.78C937.5 1026.64 933.58 1020.44 929.79 1014.17C926 1007.9 922.35 1001.53 918.74 995.15C915.12 988.77 911.6 982.34 908.11 975.89C904.61 969.44 901.08 963.01 897.77 956.47C894.46 949.93 891.25 943.34 888.23 936.66C885.2 929.99 882.38 923.21 879.6 916.43C876.82 909.64 874.14 902.81 871.55 895.96C868.96 889.1 866.39 882.22 864.05 875.28C861.71 868.33 859.62 861.3 857.51 854.28C855.4 847.26 853.36 840.21 851.37 833.15C849.39 826.1 847.43 819.02 845.61 811.92C843.78 804.82 842.06 797.7 840.41 790.55C838.76 783.41 837.13 776.26 835.72 769.06C834.3 761.87 833.08 754.63 831.93 747.39C830.77 740.16 829.71 732.9 828.78 725.63C827.85 718.36 826.93 711.07 826.33 703.77C825.72 696.47 825.38 689.14 825.16 681.81C824.93 674.49 824.85 667.16 824.98 659.83C825.11 652.5 825.42 645.17 825.95 637.86C826.49 630.55 827.35 623.26 828.19 615.98C829.03 608.7 829.96 601.42 831 594.16C832.03 586.91 832.92 579.61 834.4 572.44C835.88 565.28 837.95 558.24 839.9 551.18C841.85 544.12 843.85 537.04 846.1 530.07C848.35 523.1 850.78 516.19 853.41 509.35C856.03 502.52 858.97 495.78 861.85 489.04C864.73 482.3 867.46 475.49 870.66 468.9C873.85 462.31 877.51 455.94 881.02 449.5C884.52 443.06 887.79 436.46 891.68 430.27C895.56 424.07 899.95 418.21 904.31 412.33C908.68 406.45 913.1 400.56 917.86 395.01C922.62 389.45 927.71 384.2 932.89 379.03C938.07 373.86 943.4 368.76 948.95 363.99C954.49 359.22 960.27 354.73 966.17 350.41C972.07 346.08 978.13 341.88 984.37 338.06C990.61 334.24 997.1 330.82 1003.62 327.5C1010.14 324.17 1016.73 320.92 1023.49 318.12C1030.25 315.31 1037.17 312.77 1044.17 310.66C1051.16 308.55 1058.26 306.78 1065.44 305.45C1072.62 304.13 1079.93 303.11 1087.22 302.71C1094.51 302.31 1104.19 302.96 1109.18 303.07C1114.17 303.18 1115.84 303.33 1117.17 303.38" fill="none" stroke="#e21b20" stroke-width="4.6" stroke-linecap="round" stroke-linejoin="round"/></svg></body></html>
